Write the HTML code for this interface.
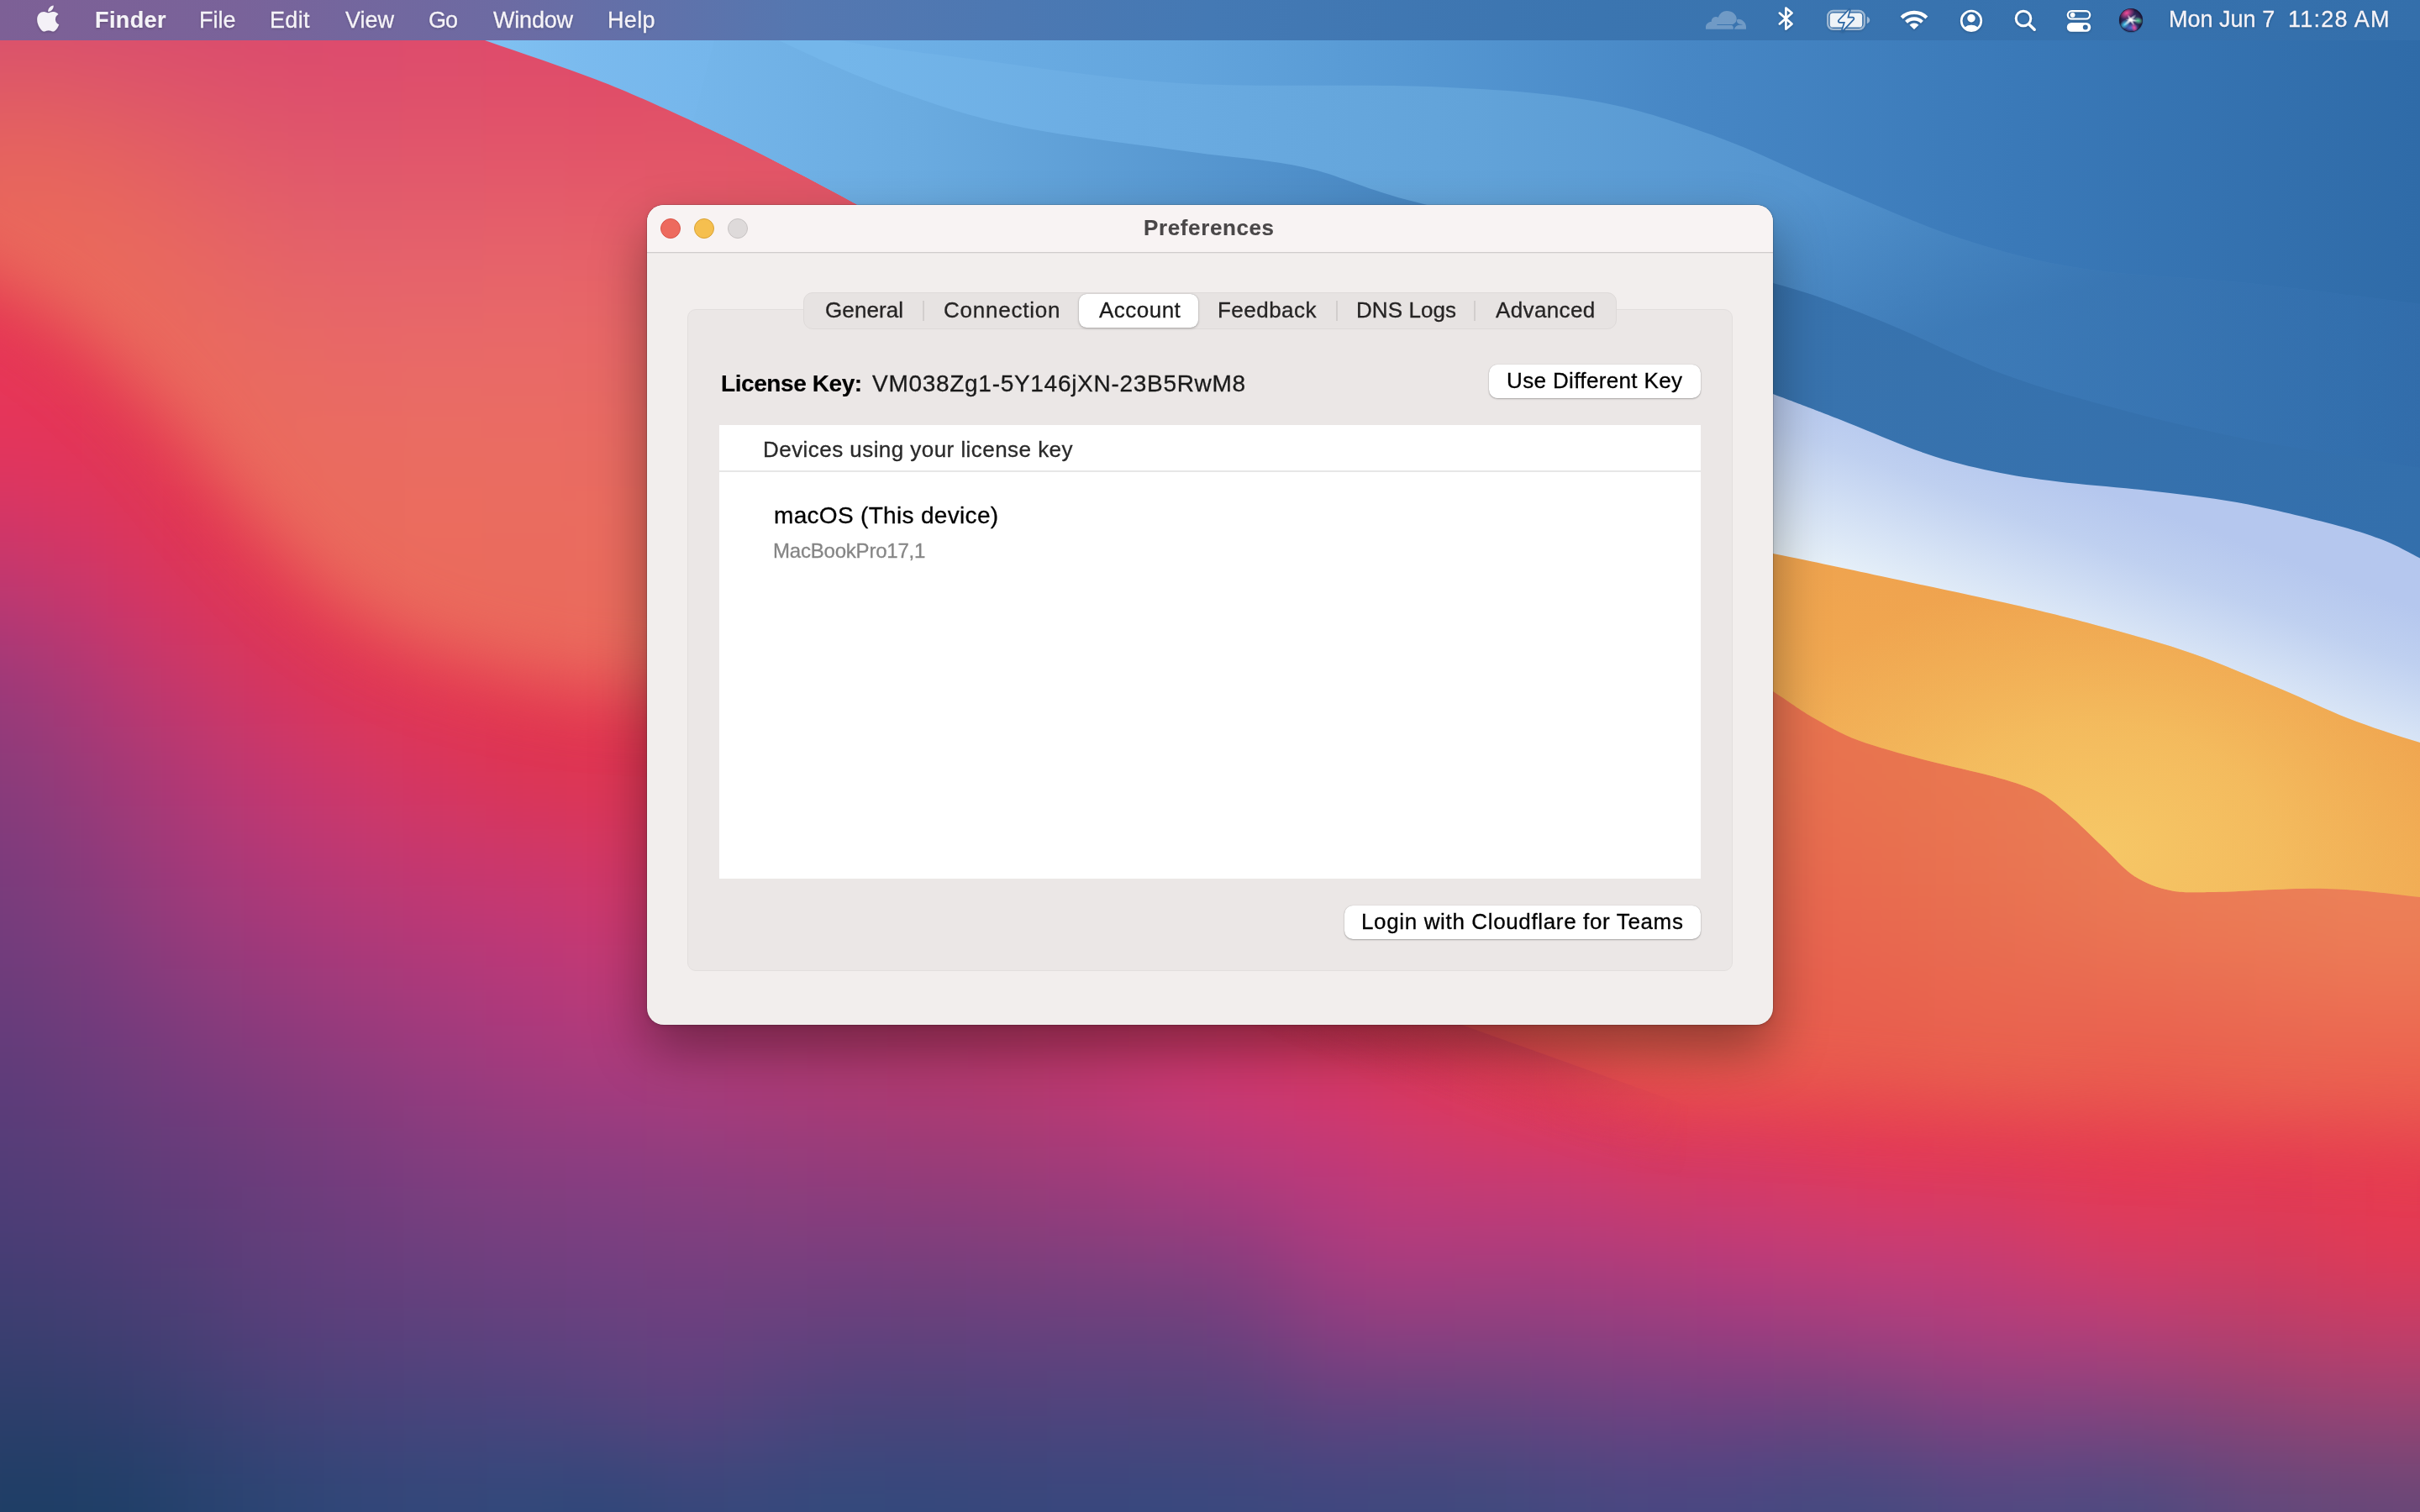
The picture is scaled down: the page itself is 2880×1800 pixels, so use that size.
<!DOCTYPE html>
<html lang="en"><head><meta charset="utf-8"><title>Preferences</title>
<style>
html,body{margin:0;padding:0;}
body{width:2880px;height:1800px;overflow:hidden;position:relative;background:#c8386c;font-family:"Liberation Sans", sans-serif;}
.t{position:absolute;white-space:nowrap;line-height:1;will-change:transform;-webkit-text-stroke:0.3px currentColor;}
.t.b{-webkit-text-stroke:0.15px currentColor;}
#menubar{position:absolute;left:0;top:0;width:2880px;height:48px;background:linear-gradient(90deg,#7d6096 0,#79639a 10%,#6c6ba3 21%,#5577b0 33%,#4479b4 50%,#3b75b0 66%,#3873af 80%,#346fab 100%);}
#menubar .t{color:#f5f3f8;text-shadow:0 1px 3px rgba(0,0,0,0.25);}
#win{position:absolute;left:770px;top:244px;width:1340px;height:976px;border-radius:20px;background:#f2eeed;box-shadow:0 0 0 1px rgba(0,0,0,0.12),0 30px 64px rgba(0,0,0,0.38),0 2px 6px rgba(0,0,0,0.10);overflow:hidden;}
#titlebar{position:absolute;left:0;top:0;width:1340px;height:56px;background:#f8f3f3;border-bottom:1px solid #d0cccc;box-shadow:0 1px 0 rgba(0,0,0,0.035);}
.tl{position:absolute;top:16px;width:24px;height:24px;border-radius:50%;box-sizing:border-box;}
#box{position:absolute;left:48px;top:124px;width:1244px;height:788px;background:#ebe7e6;border:1px solid #e2dedd;border-radius:10px;box-sizing:border-box;}
#seg{position:absolute;left:186px;top:104px;width:968px;height:44px;background:#e7e3e2;border:1px solid #dedad9;border-radius:11px;box-sizing:border-box;}
#segsel{position:absolute;left:514px;top:106px;width:142px;height:40px;background:#fff;border-radius:9px;box-shadow:0 1px 3px rgba(0,0,0,0.25),0 0 1px rgba(0,0,0,0.3);}
.sep{position:absolute;top:114px;width:2px;height:24px;background:#d2cecd;}
.btn{position:absolute;height:40px;background:#fff;border-radius:10px;box-shadow:0 1px 2px rgba(0,0,0,0.28),0 0 1px rgba(0,0,0,0.25);}
#table{position:absolute;left:86px;top:262px;width:1168px;height:540px;background:#fff;}
#thead{position:absolute;left:0;top:54px;width:1168px;height:2px;background:#e6e6e6;}
</style></head><body>
<svg id="wall" width="2880" height="1800" viewBox="0 0 2880 1800" style="position:absolute;left:0;top:0">
<defs>
<filter id="fb" filterUnits="userSpaceOnUse" x="-300" y="-300" width="3480" height="2400" color-interpolation-filters="sRGB"><feGaussianBlur stdDeviation="48"/></filter>
<filter id="fe" filterUnits="userSpaceOnUse" x="-300" y="-300" width="3480" height="2400" color-interpolation-filters="sRGB"><feGaussianBlur stdDeviation="42"/></filter>
<clipPath id="cpb1"><path d="M-200.0 250.0 C-166.7 265.3 -49.8 316.2 0.0 342.0 C49.8 367.8 66.0 378.7 99.0 405.0 C132.0 431.3 164.8 464.2 198.0 500.0 C231.2 535.8 264.8 584.0 298.0 620.0 C331.2 656.0 364.0 690.8 397.0 716.0 C430.0 741.2 463.0 757.0 496.0 771.0 C529.0 785.0 562.0 791.8 595.0 800.0 C628.0 808.2 665.0 815.8 694.0 820.0 C723.0 824.2 718.0 820.0 769.0 825.0 C820.0 830.0 894.8 810.8 1000.0 850.0 C1105.2 889.2 1276.3 998.2 1400.0 1060.0 C1523.7 1121.8 1665.3 1186.7 1742.0 1221.0 C1818.7 1255.3 1823.7 1253.5 1860.0 1266.0 C1896.3 1278.5 1918.3 1289.2 1960.0 1296.0 C2001.7 1302.8 2063.2 1303.7 2110.0 1307.0 C2156.8 1310.3 2190.7 1312.7 2241.0 1316.0 C2291.3 1319.3 2355.0 1323.3 2412.0 1327.0 C2469.0 1330.7 2526.0 1335.2 2583.0 1338.0 C2640.0 1340.8 2704.5 1342.0 2754.0 1344.0 C2803.5 1346.0 2822.3 1347.3 2880.0 1350.0 C2937.7 1352.7 3063.3 1358.3 3100.0 1360.0 L3100 -300 L-300 -300 Z"/></clipPath>
<linearGradient id="gsky" gradientUnits="userSpaceOnUse" x1="600" y1="60" x2="2880" y2="60">
<stop offset="0" stop-color="#7fc0f1"/><stop offset="0.044" stop-color="#7abaee"/><stop offset="0.175" stop-color="#70b2e8"/><stop offset="0.35" stop-color="#63a5dd"/><stop offset="0.48" stop-color="#5597d2"/><stop offset="0.614" stop-color="#4787c5"/><stop offset="0.79" stop-color="#3a79b8"/><stop offset="1" stop-color="#2f6ba8"/></linearGradient>
<linearGradient id="gwhite" gradientUnits="userSpaceOnUse" x1="2400" y1="545" x2="2325" y2="745">
<stop offset="0" stop-color="#b5c7ee"/><stop offset="0.3" stop-color="#bfd0f0"/><stop offset="0.65" stop-color="#d5e2f5"/><stop offset="1" stop-color="#eaf3f9"/></linearGradient>
<linearGradient id="gorange" gradientUnits="userSpaceOnUse" x1="2560" y1="720" x2="2470" y2="1040">
<stop offset="0" stop-color="#efa24e"/><stop offset="0.4" stop-color="#f0a650"/><stop offset="1" stop-color="#f1ae56"/></linearGradient>
<radialGradient id="gyel" gradientUnits="userSpaceOnUse" cx="2500" cy="1010" r="330" gradientTransform="translate(2500 1010) scale(1.35 1) rotate(18) translate(-2500 -1010)">
<stop offset="0" stop-color="#f6c766" stop-opacity="1"/><stop offset="0.45" stop-color="#f5c363" stop-opacity="0.7"/><stop offset="1" stop-color="#f3bb5e" stop-opacity="0"/></radialGradient>
<linearGradient id="gw1" gradientUnits="userSpaceOnUse" x1="1000" y1="60" x2="2880" y2="60">
<stop offset="0" stop-color="#74b6ea"/><stop offset="0.16" stop-color="#6cade3"/><stop offset="0.4" stop-color="#62a3d9"/><stop offset="0.585" stop-color="#5696d0"/><stop offset="0.745" stop-color="#4a8ac6"/><stop offset="0.96" stop-color="#3a78b6"/><stop offset="1" stop-color="#3874b2"/></linearGradient>
<linearGradient id="gw1d" gradientUnits="userSpaceOnUse" x1="0" y1="0" x2="60" y2="200" spreadMethod="pad" gradientTransform="translate(2100 240)">
<stop offset="0" stop-color="#2a64a2" stop-opacity="0"/><stop offset="1" stop-color="#2a64a2" stop-opacity="0.45"/></linearGradient>
<linearGradient id="gw2" gradientUnits="userSpaceOnUse" x1="700" y1="60" x2="2880" y2="60">
<stop offset="0" stop-color="#7abbef"/><stop offset="0.18" stop-color="#6aabe0"/><stop offset="0.37" stop-color="#5292cc"/><stop offset="0.5" stop-color="#4281bd"/><stop offset="0.66" stop-color="#3873ae"/><stop offset="1" stop-color="#336fac"/></linearGradient>
<linearGradient id="gedge" gradientUnits="userSpaceOnUse" x1="1850" y1="1260" x2="1820" y2="1345"><stop offset="0" stop-color="#b82a58" stop-opacity="0.28"/><stop offset="1" stop-color="#b82a58" stop-opacity="0"/></linearGradient>
<linearGradient id="gmaskh" gradientUnits="userSpaceOnUse" x1="1820" y1="0" x2="2010" y2="0"><stop offset="0" stop-color="#fff"/><stop offset="1" stop-color="#000"/></linearGradient>
<mask id="medge" maskUnits="userSpaceOnUse" x="1500" y="1100" width="700" height="400"><rect x="1500" y="1100" width="700" height="400" fill="url(#gmaskh)"/></mask>
<clipPath id="cpsky"><path d="M440.0 0.0 C462.8 8.0 532.2 32.2 577.0 48.0 C621.8 63.8 670.5 79.7 709.0 94.5 C747.5 109.3 775.0 122.1 808.0 137.0 C841.0 151.9 871.8 166.3 907.0 184.0 C942.2 201.7 978.5 220.7 1019.0 243.0 C1059.5 265.3 1103.2 288.5 1150.0 318.0 C1196.8 347.5 1275.0 403.0 1300.0 420.0 L1400 560 L2100 760 L2960 860 L2960 -10 L440 -10 Z"/></clipPath>
</defs>
<rect width="2880" height="1800" fill="#c8386c"/>
<g filter="url(#fb)" class="mz"><rect x="-288" y="-288" width="97" height="97" fill="#eb354c"/><rect x="-192" y="-288" width="97" height="97" fill="#eb354c"/><rect x="-96" y="-288" width="97" height="97" fill="#eb354c"/><rect x="0" y="-288" width="97" height="97" fill="#ed354b"/><rect x="96" y="-288" width="97" height="97" fill="#f03549"/><rect x="192" y="-288" width="97" height="97" fill="#f33548"/><rect x="288" y="-288" width="97" height="97" fill="#f63546"/><rect x="384" y="-288" width="97" height="97" fill="#f93545"/><rect x="480" y="-288" width="97" height="97" fill="#fb3544"/><rect x="576" y="-288" width="97" height="97" fill="#fe3443"/><rect x="672" y="-288" width="97" height="97" fill="#ff3442"/><rect x="768" y="-288" width="97" height="97" fill="#ff3442"/><rect x="864" y="-288" width="97" height="97" fill="#ff3441"/><rect x="960" y="-288" width="97" height="97" fill="#ff3440"/><rect x="1056" y="-288" width="97" height="97" fill="#ff343f"/><rect x="1152" y="-288" width="97" height="97" fill="#ff343f"/><rect x="1248" y="-288" width="97" height="97" fill="#ff343e"/><rect x="1344" y="-288" width="97" height="97" fill="#ff343e"/><rect x="1440" y="-288" width="97" height="97" fill="#ff343d"/><rect x="1536" y="-288" width="97" height="97" fill="#ff343d"/><rect x="1632" y="-288" width="97" height="97" fill="#ff343c"/><rect x="1728" y="-288" width="97" height="97" fill="#ff343c"/><rect x="1824" y="-288" width="97" height="97" fill="#ff343c"/><rect x="1920" y="-288" width="97" height="97" fill="#ff343c"/><rect x="2016" y="-288" width="97" height="97" fill="#ff343c"/><rect x="2112" y="-288" width="97" height="97" fill="#ff343c"/><rect x="2208" y="-288" width="97" height="97" fill="#ff353c"/><rect x="2304" y="-288" width="97" height="97" fill="#ff353c"/><rect x="2400" y="-288" width="97" height="97" fill="#ff353c"/><rect x="2496" y="-288" width="97" height="97" fill="#ff353c"/><rect x="2592" y="-288" width="97" height="97" fill="#ff353d"/><rect x="2688" y="-288" width="97" height="97" fill="#ff353d"/><rect x="2784" y="-288" width="97" height="97" fill="#ff353e"/><rect x="2880" y="-288" width="97" height="97" fill="#ff353e"/><rect x="2976" y="-288" width="97" height="97" fill="#ff353e"/><rect x="3072" y="-288" width="97" height="97" fill="#ff353e"/><rect x="-288" y="-192" width="97" height="97" fill="#eb354c"/><rect x="-192" y="-192" width="97" height="97" fill="#eb354c"/><rect x="-96" y="-192" width="97" height="97" fill="#eb354c"/><rect x="0" y="-192" width="97" height="97" fill="#ed354b"/><rect x="96" y="-192" width="97" height="97" fill="#f03549"/><rect x="192" y="-192" width="97" height="97" fill="#f33548"/><rect x="288" y="-192" width="97" height="97" fill="#f63546"/><rect x="384" y="-192" width="97" height="97" fill="#f93545"/><rect x="480" y="-192" width="97" height="97" fill="#fb3544"/><rect x="576" y="-192" width="97" height="97" fill="#fe3443"/><rect x="672" y="-192" width="97" height="97" fill="#ff3442"/><rect x="768" y="-192" width="97" height="97" fill="#ff3442"/><rect x="864" y="-192" width="97" height="97" fill="#ff3441"/><rect x="960" y="-192" width="97" height="97" fill="#ff3440"/><rect x="1056" y="-192" width="97" height="97" fill="#ff343f"/><rect x="1152" y="-192" width="97" height="97" fill="#ff343f"/><rect x="1248" y="-192" width="97" height="97" fill="#ff343e"/><rect x="1344" y="-192" width="97" height="97" fill="#ff343e"/><rect x="1440" y="-192" width="97" height="97" fill="#ff343d"/><rect x="1536" y="-192" width="97" height="97" fill="#ff343d"/><rect x="1632" y="-192" width="97" height="97" fill="#ff343c"/><rect x="1728" y="-192" width="97" height="97" fill="#ff343c"/><rect x="1824" y="-192" width="97" height="97" fill="#ff343c"/><rect x="1920" y="-192" width="97" height="97" fill="#ff343c"/><rect x="2016" y="-192" width="97" height="97" fill="#ff343c"/><rect x="2112" y="-192" width="97" height="97" fill="#ff343c"/><rect x="2208" y="-192" width="97" height="97" fill="#ff353c"/><rect x="2304" y="-192" width="97" height="97" fill="#ff353c"/><rect x="2400" y="-192" width="97" height="97" fill="#ff353c"/><rect x="2496" y="-192" width="97" height="97" fill="#ff353c"/><rect x="2592" y="-192" width="97" height="97" fill="#ff353d"/><rect x="2688" y="-192" width="97" height="97" fill="#ff353d"/><rect x="2784" y="-192" width="97" height="97" fill="#ff353e"/><rect x="2880" y="-192" width="97" height="97" fill="#ff353e"/><rect x="2976" y="-192" width="97" height="97" fill="#ff353e"/><rect x="3072" y="-192" width="97" height="97" fill="#ff353e"/><rect x="-288" y="-96" width="97" height="97" fill="#eb354c"/><rect x="-192" y="-96" width="97" height="97" fill="#eb354c"/><rect x="-96" y="-96" width="97" height="97" fill="#eb354c"/><rect x="0" y="-96" width="97" height="97" fill="#ed354b"/><rect x="96" y="-96" width="97" height="97" fill="#f03549"/><rect x="192" y="-96" width="97" height="97" fill="#f33548"/><rect x="288" y="-96" width="97" height="97" fill="#f63546"/><rect x="384" y="-96" width="97" height="97" fill="#f93545"/><rect x="480" y="-96" width="97" height="97" fill="#fb3544"/><rect x="576" y="-96" width="97" height="97" fill="#fe3443"/><rect x="672" y="-96" width="97" height="97" fill="#ff3442"/><rect x="768" y="-96" width="97" height="97" fill="#ff3442"/><rect x="864" y="-96" width="97" height="97" fill="#ff3441"/><rect x="960" y="-96" width="97" height="97" fill="#ff3440"/><rect x="1056" y="-96" width="97" height="97" fill="#ff343f"/><rect x="1152" y="-96" width="97" height="97" fill="#ff343f"/><rect x="1248" y="-96" width="97" height="97" fill="#ff343e"/><rect x="1344" y="-96" width="97" height="97" fill="#ff343e"/><rect x="1440" y="-96" width="97" height="97" fill="#ff343d"/><rect x="1536" y="-96" width="97" height="97" fill="#ff343d"/><rect x="1632" y="-96" width="97" height="97" fill="#ff343c"/><rect x="1728" y="-96" width="97" height="97" fill="#ff343c"/><rect x="1824" y="-96" width="97" height="97" fill="#ff343c"/><rect x="1920" y="-96" width="97" height="97" fill="#ff343c"/><rect x="2016" y="-96" width="97" height="97" fill="#ff343c"/><rect x="2112" y="-96" width="97" height="97" fill="#ff343c"/><rect x="2208" y="-96" width="97" height="97" fill="#ff353c"/><rect x="2304" y="-96" width="97" height="97" fill="#ff353c"/><rect x="2400" y="-96" width="97" height="97" fill="#ff353c"/><rect x="2496" y="-96" width="97" height="97" fill="#ff353c"/><rect x="2592" y="-96" width="97" height="97" fill="#ff353d"/><rect x="2688" y="-96" width="97" height="97" fill="#ff353d"/><rect x="2784" y="-96" width="97" height="97" fill="#ff353e"/><rect x="2880" y="-96" width="97" height="97" fill="#ff353e"/><rect x="2976" y="-96" width="97" height="97" fill="#ff353e"/><rect x="3072" y="-96" width="97" height="97" fill="#ff353e"/><rect x="-288" y="0" width="97" height="97" fill="#ea354c"/><rect x="-192" y="0" width="97" height="97" fill="#ea354c"/><rect x="-96" y="0" width="97" height="97" fill="#ea354c"/><rect x="0" y="0" width="97" height="97" fill="#eb354b"/><rect x="96" y="0" width="97" height="97" fill="#ef354a"/><rect x="192" y="0" width="97" height="97" fill="#f23548"/><rect x="288" y="0" width="97" height="97" fill="#f53547"/><rect x="384" y="0" width="97" height="97" fill="#f73546"/><rect x="480" y="0" width="97" height="97" fill="#fa3545"/><rect x="576" y="0" width="97" height="97" fill="#fc3544"/><rect x="672" y="0" width="97" height="97" fill="#ff3443"/><rect x="768" y="0" width="97" height="97" fill="#ff3442"/><rect x="864" y="0" width="97" height="97" fill="#ff3441"/><rect x="960" y="0" width="97" height="97" fill="#ff3441"/><rect x="1056" y="0" width="97" height="97" fill="#ff3440"/><rect x="1152" y="0" width="97" height="97" fill="#ff343f"/><rect x="1248" y="0" width="97" height="97" fill="#ff343f"/><rect x="1344" y="0" width="97" height="97" fill="#ff343e"/><rect x="1440" y="0" width="97" height="97" fill="#ff343d"/><rect x="1536" y="0" width="97" height="97" fill="#ff343d"/><rect x="1632" y="0" width="97" height="97" fill="#ff343d"/><rect x="1728" y="0" width="97" height="97" fill="#ff343c"/><rect x="1824" y="0" width="97" height="97" fill="#ff343c"/><rect x="1920" y="0" width="97" height="97" fill="#ff343c"/><rect x="2016" y="0" width="97" height="97" fill="#ff353c"/><rect x="2112" y="0" width="97" height="97" fill="#ff353c"/><rect x="2208" y="0" width="97" height="97" fill="#ff353c"/><rect x="2304" y="0" width="97" height="97" fill="#ff353c"/><rect x="2400" y="0" width="97" height="97" fill="#ff353c"/><rect x="2496" y="0" width="97" height="97" fill="#ff353d"/><rect x="2592" y="0" width="97" height="97" fill="#ff353d"/><rect x="2688" y="0" width="97" height="97" fill="#ff353e"/><rect x="2784" y="0" width="97" height="97" fill="#ff353e"/><rect x="2880" y="0" width="97" height="97" fill="#ff363e"/><rect x="2976" y="0" width="97" height="97" fill="#ff363e"/><rect x="3072" y="0" width="97" height="97" fill="#ff363e"/><rect x="-288" y="96" width="97" height="97" fill="#e7364d"/><rect x="-192" y="96" width="97" height="97" fill="#e7364d"/><rect x="-96" y="96" width="97" height="97" fill="#e7364d"/><rect x="0" y="96" width="97" height="97" fill="#e9364d"/><rect x="96" y="96" width="97" height="97" fill="#eb354b"/><rect x="192" y="96" width="97" height="97" fill="#ee354a"/><rect x="288" y="96" width="97" height="97" fill="#f13548"/><rect x="384" y="96" width="97" height="97" fill="#f43547"/><rect x="480" y="96" width="97" height="97" fill="#f73546"/><rect x="576" y="96" width="97" height="97" fill="#f93545"/><rect x="672" y="96" width="97" height="97" fill="#fc3544"/><rect x="768" y="96" width="97" height="97" fill="#fe3543"/><rect x="864" y="96" width="97" height="97" fill="#ff3442"/><rect x="960" y="96" width="97" height="97" fill="#ff3442"/><rect x="1056" y="96" width="97" height="97" fill="#ff3441"/><rect x="1152" y="96" width="97" height="97" fill="#ff3440"/><rect x="1248" y="96" width="97" height="97" fill="#ff343f"/><rect x="1344" y="96" width="97" height="97" fill="#ff343f"/><rect x="1440" y="96" width="97" height="97" fill="#ff343e"/><rect x="1536" y="96" width="97" height="97" fill="#ff343e"/><rect x="1632" y="96" width="97" height="97" fill="#ff343d"/><rect x="1728" y="96" width="97" height="97" fill="#ff353d"/><rect x="1824" y="96" width="97" height="97" fill="#ff353d"/><rect x="1920" y="96" width="97" height="97" fill="#ff353d"/><rect x="2016" y="96" width="97" height="97" fill="#ff353d"/><rect x="2112" y="96" width="97" height="97" fill="#ff353d"/><rect x="2208" y="96" width="97" height="97" fill="#ff353d"/><rect x="2304" y="96" width="97" height="97" fill="#ff353d"/><rect x="2400" y="96" width="97" height="97" fill="#ff353d"/><rect x="2496" y="96" width="97" height="97" fill="#ff353e"/><rect x="2592" y="96" width="97" height="97" fill="#ff353e"/><rect x="2688" y="96" width="97" height="97" fill="#ff363e"/><rect x="2784" y="96" width="97" height="97" fill="#ff363f"/><rect x="2880" y="96" width="97" height="97" fill="#ff363f"/><rect x="2976" y="96" width="97" height="97" fill="#ff363f"/><rect x="3072" y="96" width="97" height="97" fill="#ff363f"/><rect x="-288" y="192" width="97" height="97" fill="#e5364f"/><rect x="-192" y="192" width="97" height="97" fill="#e5364f"/><rect x="-96" y="192" width="97" height="97" fill="#e5364f"/><rect x="0" y="192" width="97" height="97" fill="#e6364e"/><rect x="96" y="192" width="97" height="97" fill="#e8364d"/><rect x="192" y="192" width="97" height="97" fill="#eb364b"/><rect x="288" y="192" width="97" height="97" fill="#ee354a"/><rect x="384" y="192" width="97" height="97" fill="#f13548"/><rect x="480" y="192" width="97" height="97" fill="#f43547"/><rect x="576" y="192" width="97" height="97" fill="#f63546"/><rect x="672" y="192" width="97" height="97" fill="#f83545"/><rect x="768" y="192" width="97" height="97" fill="#fb3545"/><rect x="864" y="192" width="97" height="97" fill="#fd3544"/><rect x="960" y="192" width="97" height="97" fill="#ff3543"/><rect x="1056" y="192" width="97" height="97" fill="#ff3542"/><rect x="1152" y="192" width="97" height="97" fill="#ff3441"/><rect x="1248" y="192" width="97" height="97" fill="#ff3441"/><rect x="1344" y="192" width="97" height="97" fill="#ff3540"/><rect x="1440" y="192" width="97" height="97" fill="#ff353f"/><rect x="1536" y="192" width="97" height="97" fill="#ff353f"/><rect x="1632" y="192" width="97" height="97" fill="#ff353e"/><rect x="1728" y="192" width="97" height="97" fill="#ff353e"/><rect x="1824" y="192" width="97" height="97" fill="#ff353e"/><rect x="1920" y="192" width="97" height="97" fill="#ff353d"/><rect x="2016" y="192" width="97" height="97" fill="#ff353d"/><rect x="2112" y="192" width="97" height="97" fill="#ff353d"/><rect x="2208" y="192" width="97" height="97" fill="#ff353e"/><rect x="2304" y="192" width="97" height="97" fill="#ff353e"/><rect x="2400" y="192" width="97" height="97" fill="#ff353e"/><rect x="2496" y="192" width="97" height="97" fill="#ff363e"/><rect x="2592" y="192" width="97" height="97" fill="#ff363f"/><rect x="2688" y="192" width="97" height="97" fill="#ff363f"/><rect x="2784" y="192" width="97" height="97" fill="#ff3640"/><rect x="2880" y="192" width="97" height="97" fill="#ff3640"/><rect x="2976" y="192" width="97" height="97" fill="#ff3640"/><rect x="3072" y="192" width="97" height="97" fill="#ff3640"/><rect x="-288" y="288" width="97" height="97" fill="#e4364f"/><rect x="-192" y="288" width="97" height="97" fill="#e4364f"/><rect x="-96" y="288" width="97" height="97" fill="#e4364f"/><rect x="0" y="288" width="97" height="97" fill="#e4364f"/><rect x="96" y="288" width="97" height="97" fill="#e5364e"/><rect x="192" y="288" width="97" height="97" fill="#e8364d"/><rect x="288" y="288" width="97" height="97" fill="#eb364b"/><rect x="384" y="288" width="97" height="97" fill="#ee354a"/><rect x="480" y="288" width="97" height="97" fill="#f13549"/><rect x="576" y="288" width="97" height="97" fill="#f33548"/><rect x="672" y="288" width="97" height="97" fill="#f53547"/><rect x="768" y="288" width="97" height="97" fill="#f73546"/><rect x="864" y="288" width="97" height="97" fill="#f93545"/><rect x="960" y="288" width="97" height="97" fill="#fb3544"/><rect x="1056" y="288" width="97" height="97" fill="#fd3544"/><rect x="1152" y="288" width="97" height="97" fill="#ff3543"/><rect x="1248" y="288" width="97" height="97" fill="#ff3542"/><rect x="1344" y="288" width="97" height="97" fill="#ff3541"/><rect x="1440" y="288" width="97" height="97" fill="#ff3540"/><rect x="1536" y="288" width="97" height="97" fill="#ff3540"/><rect x="1632" y="288" width="97" height="97" fill="#ff353f"/><rect x="1728" y="288" width="97" height="97" fill="#ff353f"/><rect x="1824" y="288" width="97" height="97" fill="#ff353e"/><rect x="1920" y="288" width="97" height="97" fill="#ff353e"/><rect x="2016" y="288" width="97" height="97" fill="#ff353e"/><rect x="2112" y="288" width="97" height="97" fill="#ff353e"/><rect x="2208" y="288" width="97" height="97" fill="#ff363e"/><rect x="2304" y="288" width="97" height="97" fill="#ff363f"/><rect x="2400" y="288" width="97" height="97" fill="#ff363f"/><rect x="2496" y="288" width="97" height="97" fill="#ff363f"/><rect x="2592" y="288" width="97" height="97" fill="#ff3640"/><rect x="2688" y="288" width="97" height="97" fill="#ff3640"/><rect x="2784" y="288" width="97" height="97" fill="#ff3641"/><rect x="2880" y="288" width="97" height="97" fill="#ff3641"/><rect x="2976" y="288" width="97" height="97" fill="#ff3641"/><rect x="3072" y="288" width="97" height="97" fill="#ff3641"/><rect x="-288" y="384" width="97" height="97" fill="#e8365a"/><rect x="-192" y="384" width="97" height="97" fill="#e8365a"/><rect x="-96" y="384" width="97" height="97" fill="#e8365a"/><rect x="0" y="384" width="97" height="97" fill="#e63654"/><rect x="96" y="384" width="97" height="97" fill="#e43650"/><rect x="192" y="384" width="97" height="97" fill="#e5364e"/><rect x="288" y="384" width="97" height="97" fill="#e8364d"/><rect x="384" y="384" width="97" height="97" fill="#eb364b"/><rect x="480" y="384" width="97" height="97" fill="#ed364a"/><rect x="576" y="384" width="97" height="97" fill="#ef3549"/><rect x="672" y="384" width="97" height="97" fill="#f13549"/><rect x="768" y="384" width="97" height="97" fill="#f33548"/><rect x="864" y="384" width="97" height="97" fill="#f53547"/><rect x="960" y="384" width="97" height="97" fill="#f73546"/><rect x="1056" y="384" width="97" height="97" fill="#f93545"/><rect x="1152" y="384" width="97" height="97" fill="#fb3544"/><rect x="1248" y="384" width="97" height="97" fill="#fd3543"/><rect x="1344" y="384" width="97" height="97" fill="#ff3542"/><rect x="1440" y="384" width="97" height="97" fill="#ff3541"/><rect x="1536" y="384" width="97" height="97" fill="#ff3541"/><rect x="1632" y="384" width="97" height="97" fill="#ff3540"/><rect x="1728" y="384" width="97" height="97" fill="#ff3540"/><rect x="1824" y="384" width="97" height="97" fill="#ff363f"/><rect x="1920" y="384" width="97" height="97" fill="#ff363f"/><rect x="2016" y="384" width="97" height="97" fill="#ff363f"/><rect x="2112" y="384" width="97" height="97" fill="#ff363f"/><rect x="2208" y="384" width="97" height="97" fill="#ff363f"/><rect x="2304" y="384" width="97" height="97" fill="#ff3640"/><rect x="2400" y="384" width="97" height="97" fill="#ff3640"/><rect x="2496" y="384" width="97" height="97" fill="#ff3640"/><rect x="2592" y="384" width="97" height="97" fill="#ff3641"/><rect x="2688" y="384" width="97" height="97" fill="#ff3641"/><rect x="2784" y="384" width="97" height="97" fill="#ff3742"/><rect x="2880" y="384" width="97" height="97" fill="#ff3742"/><rect x="2976" y="384" width="97" height="97" fill="#ff3742"/><rect x="3072" y="384" width="97" height="97" fill="#ff3742"/><rect x="-288" y="480" width="97" height="97" fill="#e5345c"/><rect x="-192" y="480" width="97" height="97" fill="#e5345c"/><rect x="-96" y="480" width="97" height="97" fill="#e5345c"/><rect x="0" y="480" width="97" height="97" fill="#e4355b"/><rect x="96" y="480" width="97" height="97" fill="#e33654"/><rect x="192" y="480" width="97" height="97" fill="#e4364f"/><rect x="288" y="480" width="97" height="97" fill="#e5364e"/><rect x="384" y="480" width="97" height="97" fill="#e8364d"/><rect x="480" y="480" width="97" height="97" fill="#ea364c"/><rect x="576" y="480" width="97" height="97" fill="#eb364b"/><rect x="672" y="480" width="97" height="97" fill="#ed364b"/><rect x="768" y="480" width="97" height="97" fill="#ee354a"/><rect x="864" y="480" width="97" height="97" fill="#f03549"/><rect x="960" y="480" width="97" height="97" fill="#f23548"/><rect x="1056" y="480" width="97" height="97" fill="#f43547"/><rect x="1152" y="480" width="97" height="97" fill="#f73546"/><rect x="1248" y="480" width="97" height="97" fill="#f93545"/><rect x="1344" y="480" width="97" height="97" fill="#fc3544"/><rect x="1440" y="480" width="97" height="97" fill="#fe3543"/><rect x="1536" y="480" width="97" height="97" fill="#ff3642"/><rect x="1632" y="480" width="97" height="97" fill="#ff3641"/><rect x="1728" y="480" width="97" height="97" fill="#ff3641"/><rect x="1824" y="480" width="97" height="97" fill="#ff3641"/><rect x="1920" y="480" width="97" height="97" fill="#ff3641"/><rect x="2016" y="480" width="97" height="97" fill="#ff3640"/><rect x="2112" y="480" width="97" height="97" fill="#ff3640"/><rect x="2208" y="480" width="97" height="97" fill="#ff3641"/><rect x="2304" y="480" width="97" height="97" fill="#ff3641"/><rect x="2400" y="480" width="97" height="97" fill="#ff3641"/><rect x="2496" y="480" width="97" height="97" fill="#ff3741"/><rect x="2592" y="480" width="97" height="97" fill="#ff3742"/><rect x="2688" y="480" width="97" height="97" fill="#ff3742"/><rect x="2784" y="480" width="97" height="97" fill="#ff3743"/><rect x="2880" y="480" width="97" height="97" fill="#ff3743"/><rect x="2976" y="480" width="97" height="97" fill="#ff3743"/><rect x="3072" y="480" width="97" height="97" fill="#ff3743"/><rect x="-288" y="576" width="97" height="97" fill="#d03668"/><rect x="-192" y="576" width="97" height="97" fill="#d03668"/><rect x="-96" y="576" width="97" height="97" fill="#d03668"/><rect x="0" y="576" width="97" height="97" fill="#d53665"/><rect x="96" y="576" width="97" height="97" fill="#dc365c"/><rect x="192" y="576" width="97" height="97" fill="#e23551"/><rect x="288" y="576" width="97" height="97" fill="#e4364f"/><rect x="384" y="576" width="97" height="97" fill="#e5364f"/><rect x="480" y="576" width="97" height="97" fill="#e7364e"/><rect x="576" y="576" width="97" height="97" fill="#e8364d"/><rect x="672" y="576" width="97" height="97" fill="#e9364d"/><rect x="768" y="576" width="97" height="97" fill="#ea364c"/><rect x="864" y="576" width="97" height="97" fill="#eb364b"/><rect x="960" y="576" width="97" height="97" fill="#ed364b"/><rect x="1056" y="576" width="97" height="97" fill="#ef3549"/><rect x="1152" y="576" width="97" height="97" fill="#f23548"/><rect x="1248" y="576" width="97" height="97" fill="#f53547"/><rect x="1344" y="576" width="97" height="97" fill="#f73545"/><rect x="1440" y="576" width="97" height="97" fill="#fa3644"/><rect x="1536" y="576" width="97" height="97" fill="#fc3644"/><rect x="1632" y="576" width="97" height="97" fill="#ff3643"/><rect x="1728" y="576" width="97" height="97" fill="#ff3642"/><rect x="1824" y="576" width="97" height="97" fill="#ff3742"/><rect x="1920" y="576" width="97" height="97" fill="#ff3742"/><rect x="2016" y="576" width="97" height="97" fill="#ff3742"/><rect x="2112" y="576" width="97" height="97" fill="#ff3742"/><rect x="2208" y="576" width="97" height="97" fill="#ff3742"/><rect x="2304" y="576" width="97" height="97" fill="#ff3742"/><rect x="2400" y="576" width="97" height="97" fill="#ff3742"/><rect x="2496" y="576" width="97" height="97" fill="#ff3743"/><rect x="2592" y="576" width="97" height="97" fill="#ff3743"/><rect x="2688" y="576" width="97" height="97" fill="#ff3744"/><rect x="2784" y="576" width="97" height="97" fill="#ff3744"/><rect x="2880" y="576" width="97" height="97" fill="#ff3744"/><rect x="2976" y="576" width="97" height="97" fill="#ff3744"/><rect x="3072" y="576" width="97" height="97" fill="#ff3744"/><rect x="-288" y="672" width="97" height="97" fill="#b63874"/><rect x="-192" y="672" width="97" height="97" fill="#b63874"/><rect x="-96" y="672" width="97" height="97" fill="#b63874"/><rect x="0" y="672" width="97" height="97" fill="#bd3871"/><rect x="96" y="672" width="97" height="97" fill="#ce3668"/><rect x="192" y="672" width="97" height="97" fill="#da365d"/><rect x="288" y="672" width="97" height="97" fill="#e23652"/><rect x="384" y="672" width="97" height="97" fill="#e4364e"/><rect x="480" y="672" width="97" height="97" fill="#e4364f"/><rect x="576" y="672" width="97" height="97" fill="#e4364f"/><rect x="672" y="672" width="97" height="97" fill="#e5364f"/><rect x="768" y="672" width="97" height="97" fill="#e5364e"/><rect x="864" y="672" width="97" height="97" fill="#e6364e"/><rect x="960" y="672" width="97" height="97" fill="#e7364d"/><rect x="1056" y="672" width="97" height="97" fill="#ea364c"/><rect x="1152" y="672" width="97" height="97" fill="#ed364a"/><rect x="1248" y="672" width="97" height="97" fill="#f03649"/><rect x="1344" y="672" width="97" height="97" fill="#f33647"/><rect x="1440" y="672" width="97" height="97" fill="#f63646"/><rect x="1536" y="672" width="97" height="97" fill="#f83645"/><rect x="1632" y="672" width="97" height="97" fill="#fb3745"/><rect x="1728" y="672" width="97" height="97" fill="#fc3744"/><rect x="1824" y="672" width="97" height="97" fill="#fe3744"/><rect x="1920" y="672" width="97" height="97" fill="#ff3743"/><rect x="2016" y="672" width="97" height="97" fill="#ff3743"/><rect x="2112" y="672" width="97" height="97" fill="#ff3743"/><rect x="2208" y="672" width="97" height="97" fill="#ff3744"/><rect x="2304" y="672" width="97" height="97" fill="#ff3744"/><rect x="2400" y="672" width="97" height="97" fill="#ff3744"/><rect x="2496" y="672" width="97" height="97" fill="#ff3744"/><rect x="2592" y="672" width="97" height="97" fill="#ff3745"/><rect x="2688" y="672" width="97" height="97" fill="#ff3745"/><rect x="2784" y="672" width="97" height="97" fill="#ff3845"/><rect x="2880" y="672" width="97" height="97" fill="#fe3846"/><rect x="2976" y="672" width="97" height="97" fill="#fe3846"/><rect x="3072" y="672" width="97" height="97" fill="#fe3846"/><rect x="-288" y="768" width="97" height="97" fill="#983a7a"/><rect x="-192" y="768" width="97" height="97" fill="#983a7a"/><rect x="-96" y="768" width="97" height="97" fill="#983a7a"/><rect x="0" y="768" width="97" height="97" fill="#a23978"/><rect x="96" y="768" width="97" height="97" fill="#b93871"/><rect x="192" y="768" width="97" height="97" fill="#ca3768"/><rect x="288" y="768" width="97" height="97" fill="#d7365e"/><rect x="384" y="768" width="97" height="97" fill="#e03655"/><rect x="480" y="768" width="97" height="97" fill="#e43650"/><rect x="576" y="768" width="97" height="97" fill="#e4364f"/><rect x="672" y="768" width="97" height="97" fill="#e4364f"/><rect x="768" y="768" width="97" height="97" fill="#e4364f"/><rect x="864" y="768" width="97" height="97" fill="#e4364f"/><rect x="960" y="768" width="97" height="97" fill="#e4364f"/><rect x="1056" y="768" width="97" height="97" fill="#e6364e"/><rect x="1152" y="768" width="97" height="97" fill="#e8364d"/><rect x="1248" y="768" width="97" height="97" fill="#eb364b"/><rect x="1344" y="768" width="97" height="97" fill="#ee364a"/><rect x="1440" y="768" width="97" height="97" fill="#f13648"/><rect x="1536" y="768" width="97" height="97" fill="#f43747"/><rect x="1632" y="768" width="97" height="97" fill="#f63746"/><rect x="1728" y="768" width="97" height="97" fill="#f83846"/><rect x="1824" y="768" width="97" height="97" fill="#fa3846"/><rect x="1920" y="768" width="97" height="97" fill="#fb3845"/><rect x="2016" y="768" width="97" height="97" fill="#fc3845"/><rect x="2112" y="768" width="97" height="97" fill="#fd3845"/><rect x="2208" y="768" width="97" height="97" fill="#fd3845"/><rect x="2304" y="768" width="97" height="97" fill="#fd3845"/><rect x="2400" y="768" width="97" height="97" fill="#fd3846"/><rect x="2496" y="768" width="97" height="97" fill="#fd3846"/><rect x="2592" y="768" width="97" height="97" fill="#fd3846"/><rect x="2688" y="768" width="97" height="97" fill="#fc3847"/><rect x="2784" y="768" width="97" height="97" fill="#fb3847"/><rect x="2880" y="768" width="97" height="97" fill="#fb3847"/><rect x="2976" y="768" width="97" height="97" fill="#fb3847"/><rect x="3072" y="768" width="97" height="97" fill="#fb3847"/><rect x="-288" y="864" width="97" height="97" fill="#893b7b"/><rect x="-192" y="864" width="97" height="97" fill="#893b7b"/><rect x="-96" y="864" width="97" height="97" fill="#893b7b"/><rect x="0" y="864" width="97" height="97" fill="#913b7a"/><rect x="96" y="864" width="97" height="97" fill="#a63976"/><rect x="192" y="864" width="97" height="97" fill="#b93872"/><rect x="288" y="864" width="97" height="97" fill="#c8376d"/><rect x="384" y="864" width="97" height="97" fill="#d33764"/><rect x="480" y="864" width="97" height="97" fill="#da365b"/><rect x="576" y="864" width="97" height="97" fill="#de3552"/><rect x="672" y="864" width="97" height="97" fill="#df3550"/><rect x="768" y="864" width="97" height="97" fill="#e03653"/><rect x="864" y="864" width="97" height="97" fill="#e13653"/><rect x="960" y="864" width="97" height="97" fill="#e23651"/><rect x="1056" y="864" width="97" height="97" fill="#e33650"/><rect x="1152" y="864" width="97" height="97" fill="#e4364f"/><rect x="1248" y="864" width="97" height="97" fill="#e7364d"/><rect x="1344" y="864" width="97" height="97" fill="#e9364c"/><rect x="1440" y="864" width="97" height="97" fill="#ec374b"/><rect x="1536" y="864" width="97" height="97" fill="#ef384a"/><rect x="1632" y="864" width="97" height="97" fill="#f13849"/><rect x="1728" y="864" width="97" height="97" fill="#f33848"/><rect x="1824" y="864" width="97" height="97" fill="#f53848"/><rect x="1920" y="864" width="97" height="97" fill="#f63848"/><rect x="2016" y="864" width="97" height="97" fill="#f73847"/><rect x="2112" y="864" width="97" height="97" fill="#f83847"/><rect x="2208" y="864" width="97" height="97" fill="#f83847"/><rect x="2304" y="864" width="97" height="97" fill="#f93847"/><rect x="2400" y="864" width="97" height="97" fill="#f93848"/><rect x="2496" y="864" width="97" height="97" fill="#f93848"/><rect x="2592" y="864" width="97" height="97" fill="#f83848"/><rect x="2688" y="864" width="97" height="97" fill="#f83848"/><rect x="2784" y="864" width="97" height="97" fill="#f73849"/><rect x="2880" y="864" width="97" height="97" fill="#f63849"/><rect x="2976" y="864" width="97" height="97" fill="#f63849"/><rect x="3072" y="864" width="97" height="97" fill="#f63849"/><rect x="-288" y="960" width="97" height="97" fill="#7b3c7c"/><rect x="-192" y="960" width="97" height="97" fill="#7b3c7c"/><rect x="-96" y="960" width="97" height="97" fill="#7b3c7c"/><rect x="0" y="960" width="97" height="97" fill="#833b7c"/><rect x="96" y="960" width="97" height="97" fill="#963a7a"/><rect x="192" y="960" width="97" height="97" fill="#a93978"/><rect x="288" y="960" width="97" height="97" fill="#b83875"/><rect x="384" y="960" width="97" height="97" fill="#c33871"/><rect x="480" y="960" width="97" height="97" fill="#cb376b"/><rect x="576" y="960" width="97" height="97" fill="#d03767"/><rect x="672" y="960" width="97" height="97" fill="#d53762"/><rect x="768" y="960" width="97" height="97" fill="#d7375f"/><rect x="864" y="960" width="97" height="97" fill="#d8375c"/><rect x="960" y="960" width="97" height="97" fill="#da3759"/><rect x="1056" y="960" width="97" height="97" fill="#dd3756"/><rect x="1152" y="960" width="97" height="97" fill="#e13652"/><rect x="1248" y="960" width="97" height="97" fill="#e33650"/><rect x="1344" y="960" width="97" height="97" fill="#e4364f"/><rect x="1440" y="960" width="97" height="97" fill="#e7384e"/><rect x="1536" y="960" width="97" height="97" fill="#ea394d"/><rect x="1632" y="960" width="97" height="97" fill="#ed394b"/><rect x="1728" y="960" width="97" height="97" fill="#ee394b"/><rect x="1824" y="960" width="97" height="97" fill="#f0394a"/><rect x="1920" y="960" width="97" height="97" fill="#f1394a"/><rect x="2016" y="960" width="97" height="97" fill="#f2394a"/><rect x="2112" y="960" width="97" height="97" fill="#f3394a"/><rect x="2208" y="960" width="97" height="97" fill="#f3394a"/><rect x="2304" y="960" width="97" height="97" fill="#f3394a"/><rect x="2400" y="960" width="97" height="97" fill="#f4394a"/><rect x="2496" y="960" width="97" height="97" fill="#f4394a"/><rect x="2592" y="960" width="97" height="97" fill="#f4394a"/><rect x="2688" y="960" width="97" height="97" fill="#f3394a"/><rect x="2784" y="960" width="97" height="97" fill="#f3394b"/><rect x="2880" y="960" width="97" height="97" fill="#f2394b"/><rect x="2976" y="960" width="97" height="97" fill="#f2394b"/><rect x="3072" y="960" width="97" height="97" fill="#f2394b"/><rect x="-288" y="1056" width="97" height="97" fill="#723c7c"/><rect x="-192" y="1056" width="97" height="97" fill="#723c7c"/><rect x="-96" y="1056" width="97" height="97" fill="#723c7c"/><rect x="0" y="1056" width="97" height="97" fill="#783c7c"/><rect x="96" y="1056" width="97" height="97" fill="#893b7c"/><rect x="192" y="1056" width="97" height="97" fill="#9a3a7b"/><rect x="288" y="1056" width="97" height="97" fill="#a6397a"/><rect x="384" y="1056" width="97" height="97" fill="#b13978"/><rect x="480" y="1056" width="97" height="97" fill="#ba3876"/><rect x="576" y="1056" width="97" height="97" fill="#c13876"/><rect x="672" y="1056" width="97" height="97" fill="#c83871"/><rect x="768" y="1056" width="97" height="97" fill="#ca386b"/><rect x="864" y="1056" width="97" height="97" fill="#cc3867"/><rect x="960" y="1056" width="97" height="97" fill="#ce3862"/><rect x="1056" y="1056" width="97" height="97" fill="#d2375f"/><rect x="1152" y="1056" width="97" height="97" fill="#d6375b"/><rect x="1248" y="1056" width="97" height="97" fill="#db3758"/><rect x="1344" y="1056" width="97" height="97" fill="#e23752"/><rect x="1440" y="1056" width="97" height="97" fill="#e33953"/><rect x="1536" y="1056" width="97" height="97" fill="#e63a50"/><rect x="1632" y="1056" width="97" height="97" fill="#e83a4e"/><rect x="1728" y="1056" width="97" height="97" fill="#e93a4e"/><rect x="1824" y="1056" width="97" height="97" fill="#ea3a4e"/><rect x="1920" y="1056" width="97" height="97" fill="#ec3a4d"/><rect x="2016" y="1056" width="97" height="97" fill="#ec394d"/><rect x="2112" y="1056" width="97" height="97" fill="#ed394d"/><rect x="2208" y="1056" width="97" height="97" fill="#ed394c"/><rect x="2304" y="1056" width="97" height="97" fill="#ee394c"/><rect x="2400" y="1056" width="97" height="97" fill="#ee394c"/><rect x="2496" y="1056" width="97" height="97" fill="#ee394c"/><rect x="2592" y="1056" width="97" height="97" fill="#ee394c"/><rect x="2688" y="1056" width="97" height="97" fill="#ee394c"/><rect x="2784" y="1056" width="97" height="97" fill="#ee394d"/><rect x="2880" y="1056" width="97" height="97" fill="#ee394d"/><rect x="2976" y="1056" width="97" height="97" fill="#ee394d"/><rect x="3072" y="1056" width="97" height="97" fill="#ee394d"/><rect x="-288" y="1152" width="97" height="97" fill="#673c7b"/><rect x="-192" y="1152" width="97" height="97" fill="#673c7b"/><rect x="-96" y="1152" width="97" height="97" fill="#673c7b"/><rect x="0" y="1152" width="97" height="97" fill="#6c3c7b"/><rect x="96" y="1152" width="97" height="97" fill="#793b7c"/><rect x="192" y="1152" width="97" height="97" fill="#873b7c"/><rect x="288" y="1152" width="97" height="97" fill="#933a7c"/><rect x="384" y="1152" width="97" height="97" fill="#9e3a7c"/><rect x="480" y="1152" width="97" height="97" fill="#a73a7c"/><rect x="576" y="1152" width="97" height="97" fill="#b0397b"/><rect x="672" y="1152" width="97" height="97" fill="#b73a79"/><rect x="768" y="1152" width="97" height="97" fill="#bb3a75"/><rect x="864" y="1152" width="97" height="97" fill="#bc3a71"/><rect x="960" y="1152" width="97" height="97" fill="#be396c"/><rect x="1056" y="1152" width="97" height="97" fill="#c23969"/><rect x="1152" y="1152" width="97" height="97" fill="#c73867"/><rect x="1248" y="1152" width="97" height="97" fill="#ce3865"/><rect x="1344" y="1152" width="97" height="97" fill="#d53964"/><rect x="1440" y="1152" width="97" height="97" fill="#db3960"/><rect x="1536" y="1152" width="97" height="97" fill="#e33a55"/><rect x="1632" y="1152" width="97" height="97" fill="#e53a52"/><rect x="1728" y="1152" width="97" height="97" fill="#e73a4f"/><rect x="1824" y="1152" width="97" height="97" fill="#e63a50"/><rect x="1920" y="1152" width="97" height="97" fill="#e73a50"/><rect x="2016" y="1152" width="97" height="97" fill="#e73a4f"/><rect x="2112" y="1152" width="97" height="97" fill="#e83a4f"/><rect x="2208" y="1152" width="97" height="97" fill="#e83a4f"/><rect x="2304" y="1152" width="97" height="97" fill="#e83a4f"/><rect x="2400" y="1152" width="97" height="97" fill="#e93a4f"/><rect x="2496" y="1152" width="97" height="97" fill="#e93a4f"/><rect x="2592" y="1152" width="97" height="97" fill="#e93a4f"/><rect x="2688" y="1152" width="97" height="97" fill="#e93a4f"/><rect x="2784" y="1152" width="97" height="97" fill="#e93a4f"/><rect x="2880" y="1152" width="97" height="97" fill="#e93a4f"/><rect x="2976" y="1152" width="97" height="97" fill="#e93a4f"/><rect x="3072" y="1152" width="97" height="97" fill="#e93a4f"/><rect x="-288" y="1248" width="97" height="97" fill="#5b3c79"/><rect x="-192" y="1248" width="97" height="97" fill="#5b3c79"/><rect x="-96" y="1248" width="97" height="97" fill="#5b3c79"/><rect x="0" y="1248" width="97" height="97" fill="#603c7a"/><rect x="96" y="1248" width="97" height="97" fill="#6b3c7b"/><rect x="192" y="1248" width="97" height="97" fill="#763b7c"/><rect x="288" y="1248" width="97" height="97" fill="#803b7c"/><rect x="384" y="1248" width="97" height="97" fill="#8a3b7d"/><rect x="480" y="1248" width="97" height="97" fill="#943b7e"/><rect x="576" y="1248" width="97" height="97" fill="#9d3b7e"/><rect x="672" y="1248" width="97" height="97" fill="#a33b7e"/><rect x="768" y="1248" width="97" height="97" fill="#a83c7d"/><rect x="864" y="1248" width="97" height="97" fill="#a93b78"/><rect x="960" y="1248" width="97" height="97" fill="#ab3b75"/><rect x="1056" y="1248" width="97" height="97" fill="#ae3a72"/><rect x="1152" y="1248" width="97" height="97" fill="#b43a71"/><rect x="1248" y="1248" width="97" height="97" fill="#bc3972"/><rect x="1344" y="1248" width="97" height="97" fill="#c73975"/><rect x="1440" y="1248" width="97" height="97" fill="#cd3871"/><rect x="1536" y="1248" width="97" height="97" fill="#d3386b"/><rect x="1632" y="1248" width="97" height="97" fill="#da3961"/><rect x="1728" y="1248" width="97" height="97" fill="#e13a57"/><rect x="1824" y="1248" width="97" height="97" fill="#e63a50"/><rect x="1920" y="1248" width="97" height="97" fill="#e73a4e"/><rect x="2016" y="1248" width="97" height="97" fill="#e73a4f"/><rect x="2112" y="1248" width="97" height="97" fill="#e73a4e"/><rect x="2208" y="1248" width="97" height="97" fill="#e73a4f"/><rect x="2304" y="1248" width="97" height="97" fill="#e73a4f"/><rect x="2400" y="1248" width="97" height="97" fill="#e63a4f"/><rect x="2496" y="1248" width="97" height="97" fill="#e63a4f"/><rect x="2592" y="1248" width="97" height="97" fill="#e63a50"/><rect x="2688" y="1248" width="97" height="97" fill="#e63a50"/><rect x="2784" y="1248" width="97" height="97" fill="#e63a50"/><rect x="2880" y="1248" width="97" height="97" fill="#e63a50"/><rect x="2976" y="1248" width="97" height="97" fill="#e63a50"/><rect x="3072" y="1248" width="97" height="97" fill="#e63a50"/><rect x="-288" y="1344" width="97" height="97" fill="#513d77"/><rect x="-192" y="1344" width="97" height="97" fill="#513d77"/><rect x="-96" y="1344" width="97" height="97" fill="#513d77"/><rect x="0" y="1344" width="97" height="97" fill="#553d78"/><rect x="96" y="1344" width="97" height="97" fill="#5d3d79"/><rect x="192" y="1344" width="97" height="97" fill="#663c7a"/><rect x="288" y="1344" width="97" height="97" fill="#6e3c7c"/><rect x="384" y="1344" width="97" height="97" fill="#783c7d"/><rect x="480" y="1344" width="97" height="97" fill="#813d7f"/><rect x="576" y="1344" width="97" height="97" fill="#873d7f"/><rect x="672" y="1344" width="97" height="97" fill="#8a3d80"/><rect x="768" y="1344" width="97" height="97" fill="#8f3d7f"/><rect x="864" y="1344" width="97" height="97" fill="#923d7d"/><rect x="960" y="1344" width="97" height="97" fill="#943c7b"/><rect x="1056" y="1344" width="97" height="97" fill="#973c79"/><rect x="1152" y="1344" width="97" height="97" fill="#9c3c79"/><rect x="1248" y="1344" width="97" height="97" fill="#a33b7a"/><rect x="1344" y="1344" width="97" height="97" fill="#ad3b7c"/><rect x="1440" y="1344" width="97" height="97" fill="#b53a7c"/><rect x="1536" y="1344" width="97" height="97" fill="#bf397a"/><rect x="1632" y="1344" width="97" height="97" fill="#c73a74"/><rect x="1728" y="1344" width="97" height="97" fill="#cb3a70"/><rect x="1824" y="1344" width="97" height="97" fill="#ce3a70"/><rect x="1920" y="1344" width="97" height="97" fill="#d53a64"/><rect x="2016" y="1344" width="97" height="97" fill="#d73a64"/><rect x="2112" y="1344" width="97" height="97" fill="#dd3a5e"/><rect x="2208" y="1344" width="97" height="97" fill="#e33958"/><rect x="2304" y="1344" width="97" height="97" fill="#e13a57"/><rect x="2400" y="1344" width="97" height="97" fill="#e43a54"/><rect x="2496" y="1344" width="97" height="97" fill="#e73a50"/><rect x="2592" y="1344" width="97" height="97" fill="#e53a52"/><rect x="2688" y="1344" width="97" height="97" fill="#e53a51"/><rect x="2784" y="1344" width="97" height="97" fill="#e73c4f"/><rect x="2880" y="1344" width="97" height="97" fill="#e63b4f"/><rect x="2976" y="1344" width="97" height="97" fill="#e63b4f"/><rect x="3072" y="1344" width="97" height="97" fill="#e63b4f"/><rect x="-288" y="1440" width="97" height="97" fill="#473d74"/><rect x="-192" y="1440" width="97" height="97" fill="#473d74"/><rect x="-96" y="1440" width="97" height="97" fill="#473d74"/><rect x="0" y="1440" width="97" height="97" fill="#493d75"/><rect x="96" y="1440" width="97" height="97" fill="#503d76"/><rect x="192" y="1440" width="97" height="97" fill="#593d78"/><rect x="288" y="1440" width="97" height="97" fill="#623e7b"/><rect x="384" y="1440" width="97" height="97" fill="#693e7d"/><rect x="480" y="1440" width="97" height="97" fill="#6f3f7e"/><rect x="576" y="1440" width="97" height="97" fill="#743f7f"/><rect x="672" y="1440" width="97" height="97" fill="#773f80"/><rect x="768" y="1440" width="97" height="97" fill="#7a3f7f"/><rect x="864" y="1440" width="97" height="97" fill="#7c3f7e"/><rect x="960" y="1440" width="97" height="97" fill="#7c3e7e"/><rect x="1056" y="1440" width="97" height="97" fill="#7d3e7d"/><rect x="1152" y="1440" width="97" height="97" fill="#813e7c"/><rect x="1248" y="1440" width="97" height="97" fill="#853e7d"/><rect x="1344" y="1440" width="97" height="97" fill="#8a3e7e"/><rect x="1440" y="1440" width="97" height="97" fill="#903c7e"/><rect x="1536" y="1440" width="97" height="97" fill="#a93c7f"/><rect x="1632" y="1440" width="97" height="97" fill="#b03c7e"/><rect x="1728" y="1440" width="97" height="97" fill="#af3c7d"/><rect x="1824" y="1440" width="97" height="97" fill="#b23c7c"/><rect x="1920" y="1440" width="97" height="97" fill="#b83c79"/><rect x="2016" y="1440" width="97" height="97" fill="#bf3b7a"/><rect x="2112" y="1440" width="97" height="97" fill="#c43c77"/><rect x="2208" y="1440" width="97" height="97" fill="#c83c76"/><rect x="2304" y="1440" width="97" height="97" fill="#c93c73"/><rect x="2400" y="1440" width="97" height="97" fill="#d23c69"/><rect x="2496" y="1440" width="97" height="97" fill="#d93b62"/><rect x="2592" y="1440" width="97" height="97" fill="#d63c5f"/><rect x="2688" y="1440" width="97" height="97" fill="#d93b5a"/><rect x="2784" y="1440" width="97" height="97" fill="#e33954"/><rect x="2880" y="1440" width="97" height="97" fill="#e13954"/><rect x="2976" y="1440" width="97" height="97" fill="#e13954"/><rect x="3072" y="1440" width="97" height="97" fill="#e13954"/><rect x="-288" y="1536" width="97" height="97" fill="#3a3e70"/><rect x="-192" y="1536" width="97" height="97" fill="#3a3e70"/><rect x="-96" y="1536" width="97" height="97" fill="#3a3e70"/><rect x="0" y="1536" width="97" height="97" fill="#3c3e70"/><rect x="96" y="1536" width="97" height="97" fill="#423e72"/><rect x="192" y="1536" width="97" height="97" fill="#4b3f76"/><rect x="288" y="1536" width="97" height="97" fill="#563f7a"/><rect x="384" y="1536" width="97" height="97" fill="#5a407c"/><rect x="480" y="1536" width="97" height="97" fill="#5d417d"/><rect x="576" y="1536" width="97" height="97" fill="#61417e"/><rect x="672" y="1536" width="97" height="97" fill="#66417f"/><rect x="768" y="1536" width="97" height="97" fill="#6a407f"/><rect x="864" y="1536" width="97" height="97" fill="#67417e"/><rect x="960" y="1536" width="97" height="97" fill="#64417d"/><rect x="1056" y="1536" width="97" height="97" fill="#63417c"/><rect x="1152" y="1536" width="97" height="97" fill="#66417d"/><rect x="1248" y="1536" width="97" height="97" fill="#68417d"/><rect x="1344" y="1536" width="97" height="97" fill="#68417d"/><rect x="1440" y="1536" width="97" height="97" fill="#72407e"/><rect x="1536" y="1536" width="97" height="97" fill="#893e80"/><rect x="1632" y="1536" width="97" height="97" fill="#8e3f80"/><rect x="1728" y="1536" width="97" height="97" fill="#8c4080"/><rect x="1824" y="1536" width="97" height="97" fill="#8f3f80"/><rect x="1920" y="1536" width="97" height="97" fill="#953e80"/><rect x="2016" y="1536" width="97" height="97" fill="#9b3d80"/><rect x="2112" y="1536" width="97" height="97" fill="#9e3e7f"/><rect x="2208" y="1536" width="97" height="97" fill="#a63f7f"/><rect x="2304" y="1536" width="97" height="97" fill="#ae3e7e"/><rect x="2400" y="1536" width="97" height="97" fill="#b13e7b"/><rect x="2496" y="1536" width="97" height="97" fill="#b63f78"/><rect x="2592" y="1536" width="97" height="97" fill="#b63f6f"/><rect x="2688" y="1536" width="97" height="97" fill="#bb3e6a"/><rect x="2784" y="1536" width="97" height="97" fill="#c43d69"/><rect x="2880" y="1536" width="97" height="97" fill="#c43d68"/><rect x="2976" y="1536" width="97" height="97" fill="#c43d68"/><rect x="3072" y="1536" width="97" height="97" fill="#c43d68"/><rect x="-288" y="1632" width="97" height="97" fill="#2c3e6b"/><rect x="-192" y="1632" width="97" height="97" fill="#2c3e6b"/><rect x="-96" y="1632" width="97" height="97" fill="#2c3e6b"/><rect x="0" y="1632" width="97" height="97" fill="#2d3e6b"/><rect x="96" y="1632" width="97" height="97" fill="#313e6d"/><rect x="192" y="1632" width="97" height="97" fill="#394072"/><rect x="288" y="1632" width="97" height="97" fill="#424277"/><rect x="384" y="1632" width="97" height="97" fill="#46437a"/><rect x="480" y="1632" width="97" height="97" fill="#48447c"/><rect x="576" y="1632" width="97" height="97" fill="#4b447d"/><rect x="672" y="1632" width="97" height="97" fill="#51447d"/><rect x="768" y="1632" width="97" height="97" fill="#59437e"/><rect x="864" y="1632" width="97" height="97" fill="#51447d"/><rect x="960" y="1632" width="97" height="97" fill="#4b447b"/><rect x="1056" y="1632" width="97" height="97" fill="#4a447b"/><rect x="1152" y="1632" width="97" height="97" fill="#4e437c"/><rect x="1248" y="1632" width="97" height="97" fill="#4f447d"/><rect x="1344" y="1632" width="97" height="97" fill="#51447c"/><rect x="1440" y="1632" width="97" height="97" fill="#52447c"/><rect x="1536" y="1632" width="97" height="97" fill="#61427f"/><rect x="1632" y="1632" width="97" height="97" fill="#5f447f"/><rect x="1728" y="1632" width="97" height="97" fill="#63447f"/><rect x="1824" y="1632" width="97" height="97" fill="#694380"/><rect x="1920" y="1632" width="97" height="97" fill="#6e4281"/><rect x="2016" y="1632" width="97" height="97" fill="#6f4080"/><rect x="2112" y="1632" width="97" height="97" fill="#6c437f"/><rect x="2208" y="1632" width="97" height="97" fill="#75427f"/><rect x="2304" y="1632" width="97" height="97" fill="#824180"/><rect x="2400" y="1632" width="97" height="97" fill="#824380"/><rect x="2496" y="1632" width="97" height="97" fill="#83437d"/><rect x="2592" y="1632" width="97" height="97" fill="#894378"/><rect x="2688" y="1632" width="97" height="97" fill="#914375"/><rect x="2784" y="1632" width="97" height="97" fill="#984374"/><rect x="2880" y="1632" width="97" height="97" fill="#994372"/><rect x="2976" y="1632" width="97" height="97" fill="#994372"/><rect x="3072" y="1632" width="97" height="97" fill="#994372"/><rect x="-288" y="1728" width="97" height="97" fill="#203e66"/><rect x="-192" y="1728" width="97" height="97" fill="#203e66"/><rect x="-96" y="1728" width="97" height="97" fill="#203e66"/><rect x="0" y="1728" width="97" height="97" fill="#1f3e66"/><rect x="96" y="1728" width="97" height="97" fill="#203f68"/><rect x="192" y="1728" width="97" height="97" fill="#28426f"/><rect x="288" y="1728" width="97" height="97" fill="#2d4575"/><rect x="384" y="1728" width="97" height="97" fill="#324679"/><rect x="480" y="1728" width="97" height="97" fill="#34477a"/><rect x="576" y="1728" width="97" height="97" fill="#33487b"/><rect x="672" y="1728" width="97" height="97" fill="#314779"/><rect x="768" y="1728" width="97" height="97" fill="#39477b"/><rect x="864" y="1728" width="97" height="97" fill="#38487c"/><rect x="960" y="1728" width="97" height="97" fill="#34497c"/><rect x="1056" y="1728" width="97" height="97" fill="#35487c"/><rect x="1152" y="1728" width="97" height="97" fill="#38477c"/><rect x="1248" y="1728" width="97" height="97" fill="#39477d"/><rect x="1344" y="1728" width="97" height="97" fill="#39487e"/><rect x="1440" y="1728" width="97" height="97" fill="#3c487e"/><rect x="1536" y="1728" width="97" height="97" fill="#40477f"/><rect x="1632" y="1728" width="97" height="97" fill="#40487e"/><rect x="1728" y="1728" width="97" height="97" fill="#41497e"/><rect x="1824" y="1728" width="97" height="97" fill="#474880"/><rect x="1920" y="1728" width="97" height="97" fill="#4b4681"/><rect x="2016" y="1728" width="97" height="97" fill="#4a4781"/><rect x="2112" y="1728" width="97" height="97" fill="#464980"/><rect x="2208" y="1728" width="97" height="97" fill="#494980"/><rect x="2304" y="1728" width="97" height="97" fill="#534881"/><rect x="2400" y="1728" width="97" height="97" fill="#524981"/><rect x="2496" y="1728" width="97" height="97" fill="#4f4a7f"/><rect x="2592" y="1728" width="97" height="97" fill="#5d487d"/><rect x="2688" y="1728" width="97" height="97" fill="#66487a"/><rect x="2784" y="1728" width="97" height="97" fill="#694778"/><rect x="2880" y="1728" width="97" height="97" fill="#6c4776"/><rect x="2976" y="1728" width="97" height="97" fill="#6c4776"/><rect x="3072" y="1728" width="97" height="97" fill="#6c4776"/><rect x="-288" y="1824" width="97" height="97" fill="#1d3e66"/><rect x="-192" y="1824" width="97" height="97" fill="#1d3e66"/><rect x="-96" y="1824" width="97" height="97" fill="#1d3e66"/><rect x="0" y="1824" width="97" height="97" fill="#1c3e66"/><rect x="96" y="1824" width="97" height="97" fill="#1d4068"/><rect x="192" y="1824" width="97" height="97" fill="#24436f"/><rect x="288" y="1824" width="97" height="97" fill="#294675"/><rect x="384" y="1824" width="97" height="97" fill="#2d4778"/><rect x="480" y="1824" width="97" height="97" fill="#2f487a"/><rect x="576" y="1824" width="97" height="97" fill="#2e497b"/><rect x="672" y="1824" width="97" height="97" fill="#2a4879"/><rect x="768" y="1824" width="97" height="97" fill="#32487b"/><rect x="864" y="1824" width="97" height="97" fill="#32497c"/><rect x="960" y="1824" width="97" height="97" fill="#2e4a7c"/><rect x="1056" y="1824" width="97" height="97" fill="#31497c"/><rect x="1152" y="1824" width="97" height="97" fill="#33487d"/><rect x="1248" y="1824" width="97" height="97" fill="#34487d"/><rect x="1344" y="1824" width="97" height="97" fill="#34497e"/><rect x="1440" y="1824" width="97" height="97" fill="#37487e"/><rect x="1536" y="1824" width="97" height="97" fill="#3a487f"/><rect x="1632" y="1824" width="97" height="97" fill="#3a497f"/><rect x="1728" y="1824" width="97" height="97" fill="#3a4a7e"/><rect x="1824" y="1824" width="97" height="97" fill="#3f4980"/><rect x="1920" y="1824" width="97" height="97" fill="#434881"/><rect x="2016" y="1824" width="97" height="97" fill="#424881"/><rect x="2112" y="1824" width="97" height="97" fill="#3f4b80"/><rect x="2208" y="1824" width="97" height="97" fill="#414b80"/><rect x="2304" y="1824" width="97" height="97" fill="#494a81"/><rect x="2400" y="1824" width="97" height="97" fill="#484a81"/><rect x="2496" y="1824" width="97" height="97" fill="#454b80"/><rect x="2592" y="1824" width="97" height="97" fill="#544a7e"/><rect x="2688" y="1824" width="97" height="97" fill="#5d497b"/><rect x="2784" y="1824" width="97" height="97" fill="#5f4879"/><rect x="2880" y="1824" width="97" height="97" fill="#634877"/><rect x="2976" y="1824" width="97" height="97" fill="#634877"/><rect x="3072" y="1824" width="97" height="97" fill="#634877"/><rect x="-288" y="1920" width="97" height="97" fill="#1d3e66"/><rect x="-192" y="1920" width="97" height="97" fill="#1d3e66"/><rect x="-96" y="1920" width="97" height="97" fill="#1d3e66"/><rect x="0" y="1920" width="97" height="97" fill="#1c3e66"/><rect x="96" y="1920" width="97" height="97" fill="#1d4068"/><rect x="192" y="1920" width="97" height="97" fill="#24436f"/><rect x="288" y="1920" width="97" height="97" fill="#294675"/><rect x="384" y="1920" width="97" height="97" fill="#2d4778"/><rect x="480" y="1920" width="97" height="97" fill="#2f487a"/><rect x="576" y="1920" width="97" height="97" fill="#2e497b"/><rect x="672" y="1920" width="97" height="97" fill="#2a4879"/><rect x="768" y="1920" width="97" height="97" fill="#32487b"/><rect x="864" y="1920" width="97" height="97" fill="#32497c"/><rect x="960" y="1920" width="97" height="97" fill="#2e4a7c"/><rect x="1056" y="1920" width="97" height="97" fill="#31497c"/><rect x="1152" y="1920" width="97" height="97" fill="#33487d"/><rect x="1248" y="1920" width="97" height="97" fill="#34487d"/><rect x="1344" y="1920" width="97" height="97" fill="#34497e"/><rect x="1440" y="1920" width="97" height="97" fill="#37487e"/><rect x="1536" y="1920" width="97" height="97" fill="#3a487f"/><rect x="1632" y="1920" width="97" height="97" fill="#3a497f"/><rect x="1728" y="1920" width="97" height="97" fill="#3a4a7e"/><rect x="1824" y="1920" width="97" height="97" fill="#3f4980"/><rect x="1920" y="1920" width="97" height="97" fill="#434881"/><rect x="2016" y="1920" width="97" height="97" fill="#424881"/><rect x="2112" y="1920" width="97" height="97" fill="#3f4b80"/><rect x="2208" y="1920" width="97" height="97" fill="#414b80"/><rect x="2304" y="1920" width="97" height="97" fill="#494a81"/><rect x="2400" y="1920" width="97" height="97" fill="#484a81"/><rect x="2496" y="1920" width="97" height="97" fill="#454b80"/><rect x="2592" y="1920" width="97" height="97" fill="#544a7e"/><rect x="2688" y="1920" width="97" height="97" fill="#5d497b"/><rect x="2784" y="1920" width="97" height="97" fill="#5f4879"/><rect x="2880" y="1920" width="97" height="97" fill="#634877"/><rect x="2976" y="1920" width="97" height="97" fill="#634877"/><rect x="3072" y="1920" width="97" height="97" fill="#634877"/><rect x="-288" y="2016" width="97" height="97" fill="#1d3e66"/><rect x="-192" y="2016" width="97" height="97" fill="#1d3e66"/><rect x="-96" y="2016" width="97" height="97" fill="#1d3e66"/><rect x="0" y="2016" width="97" height="97" fill="#1c3e66"/><rect x="96" y="2016" width="97" height="97" fill="#1d4068"/><rect x="192" y="2016" width="97" height="97" fill="#24436f"/><rect x="288" y="2016" width="97" height="97" fill="#294675"/><rect x="384" y="2016" width="97" height="97" fill="#2d4778"/><rect x="480" y="2016" width="97" height="97" fill="#2f487a"/><rect x="576" y="2016" width="97" height="97" fill="#2e497b"/><rect x="672" y="2016" width="97" height="97" fill="#2a4879"/><rect x="768" y="2016" width="97" height="97" fill="#32487b"/><rect x="864" y="2016" width="97" height="97" fill="#32497c"/><rect x="960" y="2016" width="97" height="97" fill="#2e4a7c"/><rect x="1056" y="2016" width="97" height="97" fill="#31497c"/><rect x="1152" y="2016" width="97" height="97" fill="#33487d"/><rect x="1248" y="2016" width="97" height="97" fill="#34487d"/><rect x="1344" y="2016" width="97" height="97" fill="#34497e"/><rect x="1440" y="2016" width="97" height="97" fill="#37487e"/><rect x="1536" y="2016" width="97" height="97" fill="#3a487f"/><rect x="1632" y="2016" width="97" height="97" fill="#3a497f"/><rect x="1728" y="2016" width="97" height="97" fill="#3a4a7e"/><rect x="1824" y="2016" width="97" height="97" fill="#3f4980"/><rect x="1920" y="2016" width="97" height="97" fill="#434881"/><rect x="2016" y="2016" width="97" height="97" fill="#424881"/><rect x="2112" y="2016" width="97" height="97" fill="#3f4b80"/><rect x="2208" y="2016" width="97" height="97" fill="#414b80"/><rect x="2304" y="2016" width="97" height="97" fill="#494a81"/><rect x="2400" y="2016" width="97" height="97" fill="#484a81"/><rect x="2496" y="2016" width="97" height="97" fill="#454b80"/><rect x="2592" y="2016" width="97" height="97" fill="#544a7e"/><rect x="2688" y="2016" width="97" height="97" fill="#5d497b"/><rect x="2784" y="2016" width="97" height="97" fill="#5f4879"/><rect x="2880" y="2016" width="97" height="97" fill="#634877"/><rect x="2976" y="2016" width="97" height="97" fill="#634877"/><rect x="3072" y="2016" width="97" height="97" fill="#634877"/></g>
<g filter="url(#fe)"><g clip-path="url(#cpb1)"><g filter="url(#fb)" class="mz"><rect x="-288" y="-288" width="97" height="97" fill="#d74d6f"/><rect x="-192" y="-288" width="97" height="97" fill="#d74d6f"/><rect x="-96" y="-288" width="97" height="97" fill="#d74d6f"/><rect x="0" y="-288" width="97" height="97" fill="#d74c6f"/><rect x="96" y="-288" width="97" height="97" fill="#d74b70"/><rect x="192" y="-288" width="97" height="97" fill="#d9496f"/><rect x="288" y="-288" width="97" height="97" fill="#da486e"/><rect x="384" y="-288" width="97" height="97" fill="#db486d"/><rect x="480" y="-288" width="97" height="97" fill="#dc486d"/><rect x="576" y="-288" width="97" height="97" fill="#dd486b"/><rect x="672" y="-288" width="97" height="97" fill="#dd476a"/><rect x="768" y="-288" width="97" height="97" fill="#dd486a"/><rect x="864" y="-288" width="97" height="97" fill="#dd496a"/><rect x="960" y="-288" width="97" height="97" fill="#dd496a"/><rect x="1056" y="-288" width="97" height="97" fill="#dd496a"/><rect x="1152" y="-288" width="97" height="97" fill="#de4a6b"/><rect x="1248" y="-288" width="97" height="97" fill="#de4b6c"/><rect x="1344" y="-288" width="97" height="97" fill="#df4d6c"/><rect x="1440" y="-288" width="97" height="97" fill="#e04e6d"/><rect x="1536" y="-288" width="97" height="97" fill="#e04f6c"/><rect x="1632" y="-288" width="97" height="97" fill="#e0506c"/><rect x="1728" y="-288" width="97" height="97" fill="#e1516c"/><rect x="1824" y="-288" width="97" height="97" fill="#e1526c"/><rect x="1920" y="-288" width="97" height="97" fill="#e1536c"/><rect x="2016" y="-288" width="97" height="97" fill="#e1546b"/><rect x="2112" y="-288" width="97" height="97" fill="#e15569"/><rect x="2208" y="-288" width="97" height="97" fill="#e25768"/><rect x="2304" y="-288" width="97" height="97" fill="#e25767"/><rect x="2400" y="-288" width="97" height="97" fill="#e25867"/><rect x="2496" y="-288" width="97" height="97" fill="#e25767"/><rect x="2592" y="-288" width="97" height="97" fill="#e25768"/><rect x="2688" y="-288" width="97" height="97" fill="#e25669"/><rect x="2784" y="-288" width="97" height="97" fill="#e1556b"/><rect x="2880" y="-288" width="97" height="97" fill="#e1546b"/><rect x="2976" y="-288" width="97" height="97" fill="#e1546b"/><rect x="3072" y="-288" width="97" height="97" fill="#e1546b"/><rect x="-288" y="-192" width="97" height="97" fill="#d74d6f"/><rect x="-192" y="-192" width="97" height="97" fill="#d74d6f"/><rect x="-96" y="-192" width="97" height="97" fill="#d74d6f"/><rect x="0" y="-192" width="97" height="97" fill="#d74c6f"/><rect x="96" y="-192" width="97" height="97" fill="#d74b70"/><rect x="192" y="-192" width="97" height="97" fill="#d9496f"/><rect x="288" y="-192" width="97" height="97" fill="#da486e"/><rect x="384" y="-192" width="97" height="97" fill="#db486d"/><rect x="480" y="-192" width="97" height="97" fill="#dc486d"/><rect x="576" y="-192" width="97" height="97" fill="#dd486b"/><rect x="672" y="-192" width="97" height="97" fill="#dd476a"/><rect x="768" y="-192" width="97" height="97" fill="#dd486a"/><rect x="864" y="-192" width="97" height="97" fill="#dd496a"/><rect x="960" y="-192" width="97" height="97" fill="#dd496a"/><rect x="1056" y="-192" width="97" height="97" fill="#dd496a"/><rect x="1152" y="-192" width="97" height="97" fill="#de4a6b"/><rect x="1248" y="-192" width="97" height="97" fill="#de4b6c"/><rect x="1344" y="-192" width="97" height="97" fill="#df4d6c"/><rect x="1440" y="-192" width="97" height="97" fill="#e04e6d"/><rect x="1536" y="-192" width="97" height="97" fill="#e04f6c"/><rect x="1632" y="-192" width="97" height="97" fill="#e0506c"/><rect x="1728" y="-192" width="97" height="97" fill="#e1516c"/><rect x="1824" y="-192" width="97" height="97" fill="#e1526c"/><rect x="1920" y="-192" width="97" height="97" fill="#e1536c"/><rect x="2016" y="-192" width="97" height="97" fill="#e1546b"/><rect x="2112" y="-192" width="97" height="97" fill="#e15569"/><rect x="2208" y="-192" width="97" height="97" fill="#e25768"/><rect x="2304" y="-192" width="97" height="97" fill="#e25767"/><rect x="2400" y="-192" width="97" height="97" fill="#e25867"/><rect x="2496" y="-192" width="97" height="97" fill="#e25767"/><rect x="2592" y="-192" width="97" height="97" fill="#e25768"/><rect x="2688" y="-192" width="97" height="97" fill="#e25669"/><rect x="2784" y="-192" width="97" height="97" fill="#e1556b"/><rect x="2880" y="-192" width="97" height="97" fill="#e1546b"/><rect x="2976" y="-192" width="97" height="97" fill="#e1546b"/><rect x="3072" y="-192" width="97" height="97" fill="#e1546b"/><rect x="-288" y="-96" width="97" height="97" fill="#d74d6f"/><rect x="-192" y="-96" width="97" height="97" fill="#d74d6f"/><rect x="-96" y="-96" width="97" height="97" fill="#d74d6f"/><rect x="0" y="-96" width="97" height="97" fill="#d74c6f"/><rect x="96" y="-96" width="97" height="97" fill="#d74b70"/><rect x="192" y="-96" width="97" height="97" fill="#d9496f"/><rect x="288" y="-96" width="97" height="97" fill="#da486e"/><rect x="384" y="-96" width="97" height="97" fill="#db486d"/><rect x="480" y="-96" width="97" height="97" fill="#dc486d"/><rect x="576" y="-96" width="97" height="97" fill="#dd486b"/><rect x="672" y="-96" width="97" height="97" fill="#dd476a"/><rect x="768" y="-96" width="97" height="97" fill="#dd486a"/><rect x="864" y="-96" width="97" height="97" fill="#dd496a"/><rect x="960" y="-96" width="97" height="97" fill="#dd496a"/><rect x="1056" y="-96" width="97" height="97" fill="#dd496a"/><rect x="1152" y="-96" width="97" height="97" fill="#de4a6b"/><rect x="1248" y="-96" width="97" height="97" fill="#de4b6c"/><rect x="1344" y="-96" width="97" height="97" fill="#df4d6c"/><rect x="1440" y="-96" width="97" height="97" fill="#e04e6d"/><rect x="1536" y="-96" width="97" height="97" fill="#e04f6c"/><rect x="1632" y="-96" width="97" height="97" fill="#e0506c"/><rect x="1728" y="-96" width="97" height="97" fill="#e1516c"/><rect x="1824" y="-96" width="97" height="97" fill="#e1526c"/><rect x="1920" y="-96" width="97" height="97" fill="#e1536c"/><rect x="2016" y="-96" width="97" height="97" fill="#e1546b"/><rect x="2112" y="-96" width="97" height="97" fill="#e15569"/><rect x="2208" y="-96" width="97" height="97" fill="#e25768"/><rect x="2304" y="-96" width="97" height="97" fill="#e25767"/><rect x="2400" y="-96" width="97" height="97" fill="#e25867"/><rect x="2496" y="-96" width="97" height="97" fill="#e25767"/><rect x="2592" y="-96" width="97" height="97" fill="#e25768"/><rect x="2688" y="-96" width="97" height="97" fill="#e25669"/><rect x="2784" y="-96" width="97" height="97" fill="#e1556b"/><rect x="2880" y="-96" width="97" height="97" fill="#e1546b"/><rect x="2976" y="-96" width="97" height="97" fill="#e1546b"/><rect x="3072" y="-96" width="97" height="97" fill="#e1546b"/><rect x="-288" y="0" width="97" height="97" fill="#d8506e"/><rect x="-192" y="0" width="97" height="97" fill="#d8506e"/><rect x="-96" y="0" width="97" height="97" fill="#d8506e"/><rect x="0" y="0" width="97" height="97" fill="#d9516d"/><rect x="96" y="0" width="97" height="97" fill="#d94e6e"/><rect x="192" y="0" width="97" height="97" fill="#da4d6d"/><rect x="288" y="0" width="97" height="97" fill="#db4a6d"/><rect x="384" y="0" width="97" height="97" fill="#dc4a6d"/><rect x="480" y="0" width="97" height="97" fill="#dd4b6c"/><rect x="576" y="0" width="97" height="97" fill="#de4a6a"/><rect x="672" y="0" width="97" height="97" fill="#de4969"/><rect x="768" y="0" width="97" height="97" fill="#de4a69"/><rect x="864" y="0" width="97" height="97" fill="#de4b69"/><rect x="960" y="0" width="97" height="97" fill="#de4b69"/><rect x="1056" y="0" width="97" height="97" fill="#de4a69"/><rect x="1152" y="0" width="97" height="97" fill="#de4c6a"/><rect x="1248" y="0" width="97" height="97" fill="#df4d6b"/><rect x="1344" y="0" width="97" height="97" fill="#e04e6c"/><rect x="1440" y="0" width="97" height="97" fill="#e0506c"/><rect x="1536" y="0" width="97" height="97" fill="#e1516c"/><rect x="1632" y="0" width="97" height="97" fill="#e1526b"/><rect x="1728" y="0" width="97" height="97" fill="#e1536b"/><rect x="1824" y="0" width="97" height="97" fill="#e1546b"/><rect x="1920" y="0" width="97" height="97" fill="#e1546b"/><rect x="2016" y="0" width="97" height="97" fill="#e2566a"/><rect x="2112" y="0" width="97" height="97" fill="#e25768"/><rect x="2208" y="0" width="97" height="97" fill="#e25866"/><rect x="2304" y="0" width="97" height="97" fill="#e25965"/><rect x="2400" y="0" width="97" height="97" fill="#e25965"/><rect x="2496" y="0" width="97" height="97" fill="#e25965"/><rect x="2592" y="0" width="97" height="97" fill="#e25866"/><rect x="2688" y="0" width="97" height="97" fill="#e25768"/><rect x="2784" y="0" width="97" height="97" fill="#e2566a"/><rect x="2880" y="0" width="97" height="97" fill="#e2556b"/><rect x="2976" y="0" width="97" height="97" fill="#e2556b"/><rect x="3072" y="0" width="97" height="97" fill="#e2556b"/><rect x="-288" y="96" width="97" height="97" fill="#e46161"/><rect x="-192" y="96" width="97" height="97" fill="#e46161"/><rect x="-96" y="96" width="97" height="97" fill="#e46161"/><rect x="0" y="96" width="97" height="97" fill="#e46260"/><rect x="96" y="96" width="97" height="97" fill="#e15d64"/><rect x="192" y="96" width="97" height="97" fill="#e05768"/><rect x="288" y="96" width="97" height="97" fill="#df536b"/><rect x="384" y="96" width="97" height="97" fill="#df526c"/><rect x="480" y="96" width="97" height="97" fill="#e0526b"/><rect x="576" y="96" width="97" height="97" fill="#e1516a"/><rect x="672" y="96" width="97" height="97" fill="#e15068"/><rect x="768" y="96" width="97" height="97" fill="#e15168"/><rect x="864" y="96" width="97" height="97" fill="#e05168"/><rect x="960" y="96" width="97" height="97" fill="#e05068"/><rect x="1056" y="96" width="97" height="97" fill="#df4f68"/><rect x="1152" y="96" width="97" height="97" fill="#e05069"/><rect x="1248" y="96" width="97" height="97" fill="#e0516a"/><rect x="1344" y="96" width="97" height="97" fill="#e1526b"/><rect x="1440" y="96" width="97" height="97" fill="#e2536b"/><rect x="1536" y="96" width="97" height="97" fill="#e2546a"/><rect x="1632" y="96" width="97" height="97" fill="#e25669"/><rect x="1728" y="96" width="97" height="97" fill="#e25769"/><rect x="1824" y="96" width="97" height="97" fill="#e25868"/><rect x="1920" y="96" width="97" height="97" fill="#e35868"/><rect x="2016" y="96" width="97" height="97" fill="#e35a66"/><rect x="2112" y="96" width="97" height="97" fill="#e35b64"/><rect x="2208" y="96" width="97" height="97" fill="#e35c63"/><rect x="2304" y="96" width="97" height="97" fill="#e35d62"/><rect x="2400" y="96" width="97" height="97" fill="#e35d61"/><rect x="2496" y="96" width="97" height="97" fill="#e35d61"/><rect x="2592" y="96" width="97" height="97" fill="#e35c63"/><rect x="2688" y="96" width="97" height="97" fill="#e35b64"/><rect x="2784" y="96" width="97" height="97" fill="#e35967"/><rect x="2880" y="96" width="97" height="97" fill="#e35968"/><rect x="2976" y="96" width="97" height="97" fill="#e35968"/><rect x="3072" y="96" width="97" height="97" fill="#e35968"/><rect x="-288" y="192" width="97" height="97" fill="#e8655c"/><rect x="-192" y="192" width="97" height="97" fill="#e8655c"/><rect x="-96" y="192" width="97" height="97" fill="#e8655c"/><rect x="0" y="192" width="97" height="97" fill="#e9685a"/><rect x="96" y="192" width="97" height="97" fill="#e8675d"/><rect x="192" y="192" width="97" height="97" fill="#e56264"/><rect x="288" y="192" width="97" height="97" fill="#e25d6a"/><rect x="384" y="192" width="97" height="97" fill="#e25c6c"/><rect x="480" y="192" width="97" height="97" fill="#e35c6b"/><rect x="576" y="192" width="97" height="97" fill="#e45c6a"/><rect x="672" y="192" width="97" height="97" fill="#e45b69"/><rect x="768" y="192" width="97" height="97" fill="#e35a68"/><rect x="864" y="192" width="97" height="97" fill="#e35867"/><rect x="960" y="192" width="97" height="97" fill="#e25667"/><rect x="1056" y="192" width="97" height="97" fill="#e25567"/><rect x="1152" y="192" width="97" height="97" fill="#e25568"/><rect x="1248" y="192" width="97" height="97" fill="#e25569"/><rect x="1344" y="192" width="97" height="97" fill="#e3556a"/><rect x="1440" y="192" width="97" height="97" fill="#e3566a"/><rect x="1536" y="192" width="97" height="97" fill="#e35868"/><rect x="1632" y="192" width="97" height="97" fill="#e35967"/><rect x="1728" y="192" width="97" height="97" fill="#e45b65"/><rect x="1824" y="192" width="97" height="97" fill="#e45c64"/><rect x="1920" y="192" width="97" height="97" fill="#e45d63"/><rect x="2016" y="192" width="97" height="97" fill="#e45f62"/><rect x="2112" y="192" width="97" height="97" fill="#e46060"/><rect x="2208" y="192" width="97" height="97" fill="#e4615e"/><rect x="2304" y="192" width="97" height="97" fill="#e4625d"/><rect x="2400" y="192" width="97" height="97" fill="#e5625d"/><rect x="2496" y="192" width="97" height="97" fill="#e5625d"/><rect x="2592" y="192" width="97" height="97" fill="#e4615e"/><rect x="2688" y="192" width="97" height="97" fill="#e46060"/><rect x="2784" y="192" width="97" height="97" fill="#e45f62"/><rect x="2880" y="192" width="97" height="97" fill="#e45e63"/><rect x="2976" y="192" width="97" height="97" fill="#e45e63"/><rect x="3072" y="192" width="97" height="97" fill="#e45e63"/><rect x="-288" y="288" width="97" height="97" fill="#ea6a5c"/><rect x="-192" y="288" width="97" height="97" fill="#ea6a5c"/><rect x="-96" y="288" width="97" height="97" fill="#ea6a5c"/><rect x="0" y="288" width="97" height="97" fill="#ea6a5c"/><rect x="96" y="288" width="97" height="97" fill="#ea6b5c"/><rect x="192" y="288" width="97" height="97" fill="#e86860"/><rect x="288" y="288" width="97" height="97" fill="#e66567"/><rect x="384" y="288" width="97" height="97" fill="#e6646b"/><rect x="480" y="288" width="97" height="97" fill="#e6646b"/><rect x="576" y="288" width="97" height="97" fill="#e7656a"/><rect x="672" y="288" width="97" height="97" fill="#e76669"/><rect x="768" y="288" width="97" height="97" fill="#e66167"/><rect x="864" y="288" width="97" height="97" fill="#e55e66"/><rect x="960" y="288" width="97" height="97" fill="#e45c66"/><rect x="1056" y="288" width="97" height="97" fill="#e45a66"/><rect x="1152" y="288" width="97" height="97" fill="#e45a66"/><rect x="1248" y="288" width="97" height="97" fill="#e45a67"/><rect x="1344" y="288" width="97" height="97" fill="#e45a68"/><rect x="1440" y="288" width="97" height="97" fill="#e55b68"/><rect x="1536" y="288" width="97" height="97" fill="#e55c66"/><rect x="1632" y="288" width="97" height="97" fill="#e55e63"/><rect x="1728" y="288" width="97" height="97" fill="#e55f61"/><rect x="1824" y="288" width="97" height="97" fill="#e56160"/><rect x="1920" y="288" width="97" height="97" fill="#e5625e"/><rect x="2016" y="288" width="97" height="97" fill="#e5645c"/><rect x="2112" y="288" width="97" height="97" fill="#e5655b"/><rect x="2208" y="288" width="97" height="97" fill="#e5665a"/><rect x="2304" y="288" width="97" height="97" fill="#e66759"/><rect x="2400" y="288" width="97" height="97" fill="#e66758"/><rect x="2496" y="288" width="97" height="97" fill="#e66758"/><rect x="2592" y="288" width="97" height="97" fill="#e66659"/><rect x="2688" y="288" width="97" height="97" fill="#e6655b"/><rect x="2784" y="288" width="97" height="97" fill="#e5645e"/><rect x="2880" y="288" width="97" height="97" fill="#e5645f"/><rect x="2976" y="288" width="97" height="97" fill="#e5645f"/><rect x="3072" y="288" width="97" height="97" fill="#e5645f"/><rect x="-288" y="384" width="97" height="97" fill="#ea6a5c"/><rect x="-192" y="384" width="97" height="97" fill="#ea6a5c"/><rect x="-96" y="384" width="97" height="97" fill="#ea6a5c"/><rect x="0" y="384" width="97" height="97" fill="#ea6a5c"/><rect x="96" y="384" width="97" height="97" fill="#ea6a5c"/><rect x="192" y="384" width="97" height="97" fill="#ea6a5e"/><rect x="288" y="384" width="97" height="97" fill="#e96a62"/><rect x="384" y="384" width="97" height="97" fill="#e96967"/><rect x="480" y="384" width="97" height="97" fill="#e96a67"/><rect x="576" y="384" width="97" height="97" fill="#e96a67"/><rect x="672" y="384" width="97" height="97" fill="#e86966"/><rect x="768" y="384" width="97" height="97" fill="#e76665"/><rect x="864" y="384" width="97" height="97" fill="#e76364"/><rect x="960" y="384" width="97" height="97" fill="#e66164"/><rect x="1056" y="384" width="97" height="97" fill="#e65f64"/><rect x="1152" y="384" width="97" height="97" fill="#e65f64"/><rect x="1248" y="384" width="97" height="97" fill="#e65e65"/><rect x="1344" y="384" width="97" height="97" fill="#e65f65"/><rect x="1440" y="384" width="97" height="97" fill="#e65f64"/><rect x="1536" y="384" width="97" height="97" fill="#e66062"/><rect x="1632" y="384" width="97" height="97" fill="#e66260"/><rect x="1728" y="384" width="97" height="97" fill="#e6645d"/><rect x="1824" y="384" width="97" height="97" fill="#e6655b"/><rect x="1920" y="384" width="97" height="97" fill="#e66759"/><rect x="2016" y="384" width="97" height="97" fill="#e66957"/><rect x="2112" y="384" width="97" height="97" fill="#e66a56"/><rect x="2208" y="384" width="97" height="97" fill="#e66b56"/><rect x="2304" y="384" width="97" height="97" fill="#e76c55"/><rect x="2400" y="384" width="97" height="97" fill="#e76c54"/><rect x="2496" y="384" width="97" height="97" fill="#e76c53"/><rect x="2592" y="384" width="97" height="97" fill="#e76c54"/><rect x="2688" y="384" width="97" height="97" fill="#e76b57"/><rect x="2784" y="384" width="97" height="97" fill="#e76a5a"/><rect x="2880" y="384" width="97" height="97" fill="#e7695c"/><rect x="2976" y="384" width="97" height="97" fill="#e7695c"/><rect x="3072" y="384" width="97" height="97" fill="#e7695c"/><rect x="-288" y="480" width="97" height="97" fill="#ea6a5c"/><rect x="-192" y="480" width="97" height="97" fill="#ea6a5c"/><rect x="-96" y="480" width="97" height="97" fill="#ea6a5c"/><rect x="0" y="480" width="97" height="97" fill="#ea6a5c"/><rect x="96" y="480" width="97" height="97" fill="#ea6a5c"/><rect x="192" y="480" width="97" height="97" fill="#ea6a5c"/><rect x="288" y="480" width="97" height="97" fill="#ea6b5e"/><rect x="384" y="480" width="97" height="97" fill="#ea6c61"/><rect x="480" y="480" width="97" height="97" fill="#ea6d62"/><rect x="576" y="480" width="97" height="97" fill="#ea6c62"/><rect x="672" y="480" width="97" height="97" fill="#e96b62"/><rect x="768" y="480" width="97" height="97" fill="#e96962"/><rect x="864" y="480" width="97" height="97" fill="#e86662"/><rect x="960" y="480" width="97" height="97" fill="#e76562"/><rect x="1056" y="480" width="97" height="97" fill="#e76362"/><rect x="1152" y="480" width="97" height="97" fill="#e76362"/><rect x="1248" y="480" width="97" height="97" fill="#e76362"/><rect x="1344" y="480" width="97" height="97" fill="#e76362"/><rect x="1440" y="480" width="97" height="97" fill="#e76460"/><rect x="1536" y="480" width="97" height="97" fill="#e7645e"/><rect x="1632" y="480" width="97" height="97" fill="#e7655c"/><rect x="1728" y="480" width="97" height="97" fill="#e76759"/><rect x="1824" y="480" width="97" height="97" fill="#e76956"/><rect x="1920" y="480" width="97" height="97" fill="#e76c54"/><rect x="2016" y="480" width="97" height="97" fill="#e76e52"/><rect x="2112" y="480" width="97" height="97" fill="#e76f53"/><rect x="2208" y="480" width="97" height="97" fill="#e76f52"/><rect x="2304" y="480" width="97" height="97" fill="#e77052"/><rect x="2400" y="480" width="97" height="97" fill="#e87151"/><rect x="2496" y="480" width="97" height="97" fill="#e87150"/><rect x="2592" y="480" width="97" height="97" fill="#e87151"/><rect x="2688" y="480" width="97" height="97" fill="#e87054"/><rect x="2784" y="480" width="97" height="97" fill="#e86f58"/><rect x="2880" y="480" width="97" height="97" fill="#e86f59"/><rect x="2976" y="480" width="97" height="97" fill="#e86f59"/><rect x="3072" y="480" width="97" height="97" fill="#e86f59"/><rect x="-288" y="576" width="97" height="97" fill="#ea6a5c"/><rect x="-192" y="576" width="97" height="97" fill="#ea6a5c"/><rect x="-96" y="576" width="97" height="97" fill="#ea6a5c"/><rect x="0" y="576" width="97" height="97" fill="#ea6a5b"/><rect x="96" y="576" width="97" height="97" fill="#ea6a5c"/><rect x="192" y="576" width="97" height="97" fill="#ea6a5c"/><rect x="288" y="576" width="97" height="97" fill="#ea6a5c"/><rect x="384" y="576" width="97" height="97" fill="#ea6b5d"/><rect x="480" y="576" width="97" height="97" fill="#eb6c5e"/><rect x="576" y="576" width="97" height="97" fill="#ea6c5f"/><rect x="672" y="576" width="97" height="97" fill="#ea6c5f"/><rect x="768" y="576" width="97" height="97" fill="#e96a5f"/><rect x="864" y="576" width="97" height="97" fill="#e96860"/><rect x="960" y="576" width="97" height="97" fill="#e96760"/><rect x="1056" y="576" width="97" height="97" fill="#e86660"/><rect x="1152" y="576" width="97" height="97" fill="#e86660"/><rect x="1248" y="576" width="97" height="97" fill="#e86660"/><rect x="1344" y="576" width="97" height="97" fill="#e8675f"/><rect x="1440" y="576" width="97" height="97" fill="#e8675d"/><rect x="1536" y="576" width="97" height="97" fill="#e8675b"/><rect x="1632" y="576" width="97" height="97" fill="#e86859"/><rect x="1728" y="576" width="97" height="97" fill="#e86956"/><rect x="1824" y="576" width="97" height="97" fill="#e86c53"/><rect x="1920" y="576" width="97" height="97" fill="#e86f50"/><rect x="2016" y="576" width="97" height="97" fill="#e8714f"/><rect x="2112" y="576" width="97" height="97" fill="#e87250"/><rect x="2208" y="576" width="97" height="97" fill="#e87350"/><rect x="2304" y="576" width="97" height="97" fill="#e87450"/><rect x="2400" y="576" width="97" height="97" fill="#e87550"/><rect x="2496" y="576" width="97" height="97" fill="#e97650"/><rect x="2592" y="576" width="97" height="97" fill="#e97651"/><rect x="2688" y="576" width="97" height="97" fill="#e97554"/><rect x="2784" y="576" width="97" height="97" fill="#e97457"/><rect x="2880" y="576" width="97" height="97" fill="#e97458"/><rect x="2976" y="576" width="97" height="97" fill="#e97458"/><rect x="3072" y="576" width="97" height="97" fill="#e97458"/><rect x="-288" y="672" width="97" height="97" fill="#ea6a5b"/><rect x="-192" y="672" width="97" height="97" fill="#ea6a5b"/><rect x="-96" y="672" width="97" height="97" fill="#ea6a5b"/><rect x="0" y="672" width="97" height="97" fill="#ea6a5b"/><rect x="96" y="672" width="97" height="97" fill="#ea6a5b"/><rect x="192" y="672" width="97" height="97" fill="#ea6a5c"/><rect x="288" y="672" width="97" height="97" fill="#ea6a5c"/><rect x="384" y="672" width="97" height="97" fill="#ea6a5c"/><rect x="480" y="672" width="97" height="97" fill="#ea6a5c"/><rect x="576" y="672" width="97" height="97" fill="#ea6a5c"/><rect x="672" y="672" width="97" height="97" fill="#ea6b5d"/><rect x="768" y="672" width="97" height="97" fill="#ea6a5d"/><rect x="864" y="672" width="97" height="97" fill="#ea6a5d"/><rect x="960" y="672" width="97" height="97" fill="#e9695e"/><rect x="1056" y="672" width="97" height="97" fill="#e9685e"/><rect x="1152" y="672" width="97" height="97" fill="#e9685e"/><rect x="1248" y="672" width="97" height="97" fill="#e9695e"/><rect x="1344" y="672" width="97" height="97" fill="#e96a5d"/><rect x="1440" y="672" width="97" height="97" fill="#e9695b"/><rect x="1536" y="672" width="97" height="97" fill="#e86959"/><rect x="1632" y="672" width="97" height="97" fill="#e86956"/><rect x="1728" y="672" width="97" height="97" fill="#e86a54"/><rect x="1824" y="672" width="97" height="97" fill="#e86c51"/><rect x="1920" y="672" width="97" height="97" fill="#e86f4f"/><rect x="2016" y="672" width="97" height="97" fill="#e8724f"/><rect x="2112" y="672" width="97" height="97" fill="#e8744f"/><rect x="2208" y="672" width="97" height="97" fill="#e8754f"/><rect x="2304" y="672" width="97" height="97" fill="#e87750"/><rect x="2400" y="672" width="97" height="97" fill="#e97850"/><rect x="2496" y="672" width="97" height="97" fill="#e97a51"/><rect x="2592" y="672" width="97" height="97" fill="#e97a52"/><rect x="2688" y="672" width="97" height="97" fill="#e97a54"/><rect x="2784" y="672" width="97" height="97" fill="#ea7956"/><rect x="2880" y="672" width="97" height="97" fill="#ea7857"/><rect x="2976" y="672" width="97" height="97" fill="#ea7857"/><rect x="3072" y="672" width="97" height="97" fill="#ea7857"/><rect x="-288" y="768" width="97" height="97" fill="#ea6a5b"/><rect x="-192" y="768" width="97" height="97" fill="#ea6a5b"/><rect x="-96" y="768" width="97" height="97" fill="#ea6a5b"/><rect x="0" y="768" width="97" height="97" fill="#ea6a5b"/><rect x="96" y="768" width="97" height="97" fill="#ea6a5b"/><rect x="192" y="768" width="97" height="97" fill="#ea6a5b"/><rect x="288" y="768" width="97" height="97" fill="#ea6a5c"/><rect x="384" y="768" width="97" height="97" fill="#ea6a5c"/><rect x="480" y="768" width="97" height="97" fill="#ea6a5c"/><rect x="576" y="768" width="97" height="97" fill="#ea6a5c"/><rect x="672" y="768" width="97" height="97" fill="#ea6a5c"/><rect x="768" y="768" width="97" height="97" fill="#ea6a5c"/><rect x="864" y="768" width="97" height="97" fill="#ea6a5c"/><rect x="960" y="768" width="97" height="97" fill="#ea6a5c"/><rect x="1056" y="768" width="97" height="97" fill="#ea6a5d"/><rect x="1152" y="768" width="97" height="97" fill="#ea6a5d"/><rect x="1248" y="768" width="97" height="97" fill="#ea6a5d"/><rect x="1344" y="768" width="97" height="97" fill="#e96a5b"/><rect x="1440" y="768" width="97" height="97" fill="#e96959"/><rect x="1536" y="768" width="97" height="97" fill="#e96857"/><rect x="1632" y="768" width="97" height="97" fill="#e86854"/><rect x="1728" y="768" width="97" height="97" fill="#e86952"/><rect x="1824" y="768" width="97" height="97" fill="#e86b50"/><rect x="1920" y="768" width="97" height="97" fill="#e86e4f"/><rect x="2016" y="768" width="97" height="97" fill="#e8714f"/><rect x="2112" y="768" width="97" height="97" fill="#e8744f"/><rect x="2208" y="768" width="97" height="97" fill="#e8764f"/><rect x="2304" y="768" width="97" height="97" fill="#e97850"/><rect x="2400" y="768" width="97" height="97" fill="#e97b51"/><rect x="2496" y="768" width="97" height="97" fill="#e97d52"/><rect x="2592" y="768" width="97" height="97" fill="#ea7e54"/><rect x="2688" y="768" width="97" height="97" fill="#ea7e55"/><rect x="2784" y="768" width="97" height="97" fill="#ea7d57"/><rect x="2880" y="768" width="97" height="97" fill="#ea7c57"/><rect x="2976" y="768" width="97" height="97" fill="#ea7c57"/><rect x="3072" y="768" width="97" height="97" fill="#ea7c57"/><rect x="-288" y="864" width="97" height="97" fill="#ea6a5a"/><rect x="-192" y="864" width="97" height="97" fill="#ea6a5a"/><rect x="-96" y="864" width="97" height="97" fill="#ea6a5a"/><rect x="0" y="864" width="97" height="97" fill="#ea6a5a"/><rect x="96" y="864" width="97" height="97" fill="#ea6a5b"/><rect x="192" y="864" width="97" height="97" fill="#ea6a5b"/><rect x="288" y="864" width="97" height="97" fill="#ea6a5b"/><rect x="384" y="864" width="97" height="97" fill="#ea6a5b"/><rect x="480" y="864" width="97" height="97" fill="#ea6a5c"/><rect x="576" y="864" width="97" height="97" fill="#ea6a5c"/><rect x="672" y="864" width="97" height="97" fill="#ea6a5c"/><rect x="768" y="864" width="97" height="97" fill="#ea6a5c"/><rect x="864" y="864" width="97" height="97" fill="#ea6a5c"/><rect x="960" y="864" width="97" height="97" fill="#ea6a5c"/><rect x="1056" y="864" width="97" height="97" fill="#ea6a5c"/><rect x="1152" y="864" width="97" height="97" fill="#ea6a5c"/><rect x="1248" y="864" width="97" height="97" fill="#ea6a5c"/><rect x="1344" y="864" width="97" height="97" fill="#ea6a5b"/><rect x="1440" y="864" width="97" height="97" fill="#e96858"/><rect x="1536" y="864" width="97" height="97" fill="#e96655"/><rect x="1632" y="864" width="97" height="97" fill="#e86652"/><rect x="1728" y="864" width="97" height="97" fill="#e86751"/><rect x="1824" y="864" width="97" height="97" fill="#e8694f"/><rect x="1920" y="864" width="97" height="97" fill="#e86b4f"/><rect x="2016" y="864" width="97" height="97" fill="#e86f4f"/><rect x="2112" y="864" width="97" height="97" fill="#e8724f"/><rect x="2208" y="864" width="97" height="97" fill="#e8754f"/><rect x="2304" y="864" width="97" height="97" fill="#e97850"/><rect x="2400" y="864" width="97" height="97" fill="#e97b52"/><rect x="2496" y="864" width="97" height="97" fill="#ea7e54"/><rect x="2592" y="864" width="97" height="97" fill="#ea8055"/><rect x="2688" y="864" width="97" height="97" fill="#eb8156"/><rect x="2784" y="864" width="97" height="97" fill="#eb8057"/><rect x="2880" y="864" width="97" height="97" fill="#eb7f58"/><rect x="2976" y="864" width="97" height="97" fill="#eb7f58"/><rect x="3072" y="864" width="97" height="97" fill="#eb7f58"/><rect x="-288" y="960" width="97" height="97" fill="#ea6a5a"/><rect x="-192" y="960" width="97" height="97" fill="#ea6a5a"/><rect x="-96" y="960" width="97" height="97" fill="#ea6a5a"/><rect x="0" y="960" width="97" height="97" fill="#ea6a5a"/><rect x="96" y="960" width="97" height="97" fill="#ea6a5a"/><rect x="192" y="960" width="97" height="97" fill="#ea6a5a"/><rect x="288" y="960" width="97" height="97" fill="#ea6a5b"/><rect x="384" y="960" width="97" height="97" fill="#ea6a5b"/><rect x="480" y="960" width="97" height="97" fill="#ea6a5b"/><rect x="576" y="960" width="97" height="97" fill="#ea6a5b"/><rect x="672" y="960" width="97" height="97" fill="#ea6a5b"/><rect x="768" y="960" width="97" height="97" fill="#ea6a5b"/><rect x="864" y="960" width="97" height="97" fill="#ea6a5b"/><rect x="960" y="960" width="97" height="97" fill="#ea6a5c"/><rect x="1056" y="960" width="97" height="97" fill="#ea6a5c"/><rect x="1152" y="960" width="97" height="97" fill="#ea6a5c"/><rect x="1248" y="960" width="97" height="97" fill="#ea6b5c"/><rect x="1344" y="960" width="97" height="97" fill="#ea6a5c"/><rect x="1440" y="960" width="97" height="97" fill="#e96657"/><rect x="1536" y="960" width="97" height="97" fill="#e96353"/><rect x="1632" y="960" width="97" height="97" fill="#e86250"/><rect x="1728" y="960" width="97" height="97" fill="#e8634f"/><rect x="1824" y="960" width="97" height="97" fill="#e8654f"/><rect x="1920" y="960" width="97" height="97" fill="#e8674e"/><rect x="2016" y="960" width="97" height="97" fill="#e86a4e"/><rect x="2112" y="960" width="97" height="97" fill="#e86c4f"/><rect x="2208" y="960" width="97" height="97" fill="#e8704f"/><rect x="2304" y="960" width="97" height="97" fill="#e97551"/><rect x="2400" y="960" width="97" height="97" fill="#e97953"/><rect x="2496" y="960" width="97" height="97" fill="#ea7e54"/><rect x="2592" y="960" width="97" height="97" fill="#ea8056"/><rect x="2688" y="960" width="97" height="97" fill="#eb8257"/><rect x="2784" y="960" width="97" height="97" fill="#ec8258"/><rect x="2880" y="960" width="97" height="97" fill="#ec8158"/><rect x="2976" y="960" width="97" height="97" fill="#ec8158"/><rect x="3072" y="960" width="97" height="97" fill="#ec8158"/><rect x="-288" y="1056" width="97" height="97" fill="#ea6a5a"/><rect x="-192" y="1056" width="97" height="97" fill="#ea6a5a"/><rect x="-96" y="1056" width="97" height="97" fill="#ea6a5a"/><rect x="0" y="1056" width="97" height="97" fill="#ea6a5a"/><rect x="96" y="1056" width="97" height="97" fill="#ea6a5a"/><rect x="192" y="1056" width="97" height="97" fill="#ea6a5a"/><rect x="288" y="1056" width="97" height="97" fill="#ea6a5a"/><rect x="384" y="1056" width="97" height="97" fill="#ea6a5a"/><rect x="480" y="1056" width="97" height="97" fill="#ea6a5a"/><rect x="576" y="1056" width="97" height="97" fill="#ea6a5a"/><rect x="672" y="1056" width="97" height="97" fill="#ea6a5b"/><rect x="768" y="1056" width="97" height="97" fill="#ea6a5b"/><rect x="864" y="1056" width="97" height="97" fill="#ea6a5b"/><rect x="960" y="1056" width="97" height="97" fill="#ea6a5b"/><rect x="1056" y="1056" width="97" height="97" fill="#ea6a5b"/><rect x="1152" y="1056" width="97" height="97" fill="#ea6a5c"/><rect x="1248" y="1056" width="97" height="97" fill="#ea6a5c"/><rect x="1344" y="1056" width="97" height="97" fill="#ea6a5c"/><rect x="1440" y="1056" width="97" height="97" fill="#e96456"/><rect x="1536" y="1056" width="97" height="97" fill="#e85d4f"/><rect x="1632" y="1056" width="97" height="97" fill="#e85e4e"/><rect x="1728" y="1056" width="97" height="97" fill="#e85f4e"/><rect x="1824" y="1056" width="97" height="97" fill="#e8604e"/><rect x="1920" y="1056" width="97" height="97" fill="#e8624e"/><rect x="2016" y="1056" width="97" height="97" fill="#e8644e"/><rect x="2112" y="1056" width="97" height="97" fill="#e8654f"/><rect x="2208" y="1056" width="97" height="97" fill="#e8694f"/><rect x="2304" y="1056" width="97" height="97" fill="#e86e50"/><rect x="2400" y="1056" width="97" height="97" fill="#e97252"/><rect x="2496" y="1056" width="97" height="97" fill="#ea7854"/><rect x="2592" y="1056" width="97" height="97" fill="#eb7a55"/><rect x="2688" y="1056" width="97" height="97" fill="#eb7d56"/><rect x="2784" y="1056" width="97" height="97" fill="#ec8158"/><rect x="2880" y="1056" width="97" height="97" fill="#ed7f57"/><rect x="2976" y="1056" width="97" height="97" fill="#ed7f57"/><rect x="3072" y="1056" width="97" height="97" fill="#ed7f57"/><rect x="-288" y="1152" width="97" height="97" fill="#ea6a59"/><rect x="-192" y="1152" width="97" height="97" fill="#ea6a59"/><rect x="-96" y="1152" width="97" height="97" fill="#ea6a59"/><rect x="0" y="1152" width="97" height="97" fill="#ea6a59"/><rect x="96" y="1152" width="97" height="97" fill="#ea6a59"/><rect x="192" y="1152" width="97" height="97" fill="#eb6a59"/><rect x="288" y="1152" width="97" height="97" fill="#eb6a59"/><rect x="384" y="1152" width="97" height="97" fill="#eb6a5a"/><rect x="480" y="1152" width="97" height="97" fill="#eb6a5a"/><rect x="576" y="1152" width="97" height="97" fill="#eb6a5a"/><rect x="672" y="1152" width="97" height="97" fill="#ea6a5a"/><rect x="768" y="1152" width="97" height="97" fill="#ea6a5a"/><rect x="864" y="1152" width="97" height="97" fill="#ea6a5a"/><rect x="960" y="1152" width="97" height="97" fill="#ea6a5a"/><rect x="1056" y="1152" width="97" height="97" fill="#ea695a"/><rect x="1152" y="1152" width="97" height="97" fill="#ea695a"/><rect x="1248" y="1152" width="97" height="97" fill="#ea695a"/><rect x="1344" y="1152" width="97" height="97" fill="#ea6759"/><rect x="1440" y="1152" width="97" height="97" fill="#e96254"/><rect x="1536" y="1152" width="97" height="97" fill="#e85c4e"/><rect x="1632" y="1152" width="97" height="97" fill="#e85c4e"/><rect x="1728" y="1152" width="97" height="97" fill="#e85c4e"/><rect x="1824" y="1152" width="97" height="97" fill="#e85d4e"/><rect x="1920" y="1152" width="97" height="97" fill="#e85e4e"/><rect x="2016" y="1152" width="97" height="97" fill="#e85f4e"/><rect x="2112" y="1152" width="97" height="97" fill="#e85f4e"/><rect x="2208" y="1152" width="97" height="97" fill="#e8614e"/><rect x="2304" y="1152" width="97" height="97" fill="#e9674f"/><rect x="2400" y="1152" width="97" height="97" fill="#ea6650"/><rect x="2496" y="1152" width="97" height="97" fill="#ea6750"/><rect x="2592" y="1152" width="97" height="97" fill="#ea6a51"/><rect x="2688" y="1152" width="97" height="97" fill="#eb6e52"/><rect x="2784" y="1152" width="97" height="97" fill="#ed7053"/><rect x="2880" y="1152" width="97" height="97" fill="#ed7052"/><rect x="2976" y="1152" width="97" height="97" fill="#ed7052"/><rect x="3072" y="1152" width="97" height="97" fill="#ed7052"/><rect x="-288" y="1248" width="97" height="97" fill="#ea6a59"/><rect x="-192" y="1248" width="97" height="97" fill="#ea6a59"/><rect x="-96" y="1248" width="97" height="97" fill="#ea6a59"/><rect x="0" y="1248" width="97" height="97" fill="#ea6a59"/><rect x="96" y="1248" width="97" height="97" fill="#eb6a59"/><rect x="192" y="1248" width="97" height="97" fill="#eb6a59"/><rect x="288" y="1248" width="97" height="97" fill="#eb6a59"/><rect x="384" y="1248" width="97" height="97" fill="#eb6a59"/><rect x="480" y="1248" width="97" height="97" fill="#eb6a59"/><rect x="576" y="1248" width="97" height="97" fill="#eb6a59"/><rect x="672" y="1248" width="97" height="97" fill="#eb6a59"/><rect x="768" y="1248" width="97" height="97" fill="#eb6a59"/><rect x="864" y="1248" width="97" height="97" fill="#ea6959"/><rect x="960" y="1248" width="97" height="97" fill="#ea6959"/><rect x="1056" y="1248" width="97" height="97" fill="#ea6959"/><rect x="1152" y="1248" width="97" height="97" fill="#ea6859"/><rect x="1248" y="1248" width="97" height="97" fill="#ea6758"/><rect x="1344" y="1248" width="97" height="97" fill="#e96556"/><rect x="1440" y="1248" width="97" height="97" fill="#e96153"/><rect x="1536" y="1248" width="97" height="97" fill="#e85d4f"/><rect x="1632" y="1248" width="97" height="97" fill="#e85c4e"/><rect x="1728" y="1248" width="97" height="97" fill="#e85c4e"/><rect x="1824" y="1248" width="97" height="97" fill="#e85c4e"/><rect x="1920" y="1248" width="97" height="97" fill="#e85c4e"/><rect x="2016" y="1248" width="97" height="97" fill="#e85c4e"/><rect x="2112" y="1248" width="97" height="97" fill="#e85b4e"/><rect x="2208" y="1248" width="97" height="97" fill="#e8574e"/><rect x="2304" y="1248" width="97" height="97" fill="#e85d4e"/><rect x="2400" y="1248" width="97" height="97" fill="#e85d4e"/><rect x="2496" y="1248" width="97" height="97" fill="#e9564e"/><rect x="2592" y="1248" width="97" height="97" fill="#e95c4e"/><rect x="2688" y="1248" width="97" height="97" fill="#e95e4f"/><rect x="2784" y="1248" width="97" height="97" fill="#ea5b4e"/><rect x="2880" y="1248" width="97" height="97" fill="#ec5b4e"/><rect x="2976" y="1248" width="97" height="97" fill="#ec5b4e"/><rect x="3072" y="1248" width="97" height="97" fill="#ec5b4e"/><rect x="-288" y="1344" width="97" height="97" fill="#ea6a58"/><rect x="-192" y="1344" width="97" height="97" fill="#ea6a58"/><rect x="-96" y="1344" width="97" height="97" fill="#ea6a58"/><rect x="0" y="1344" width="97" height="97" fill="#ea6a58"/><rect x="96" y="1344" width="97" height="97" fill="#eb6a58"/><rect x="192" y="1344" width="97" height="97" fill="#eb6a58"/><rect x="288" y="1344" width="97" height="97" fill="#eb6a58"/><rect x="384" y="1344" width="97" height="97" fill="#eb6a58"/><rect x="480" y="1344" width="97" height="97" fill="#eb6a58"/><rect x="576" y="1344" width="97" height="97" fill="#eb6a58"/><rect x="672" y="1344" width="97" height="97" fill="#eb6958"/><rect x="768" y="1344" width="97" height="97" fill="#eb6958"/><rect x="864" y="1344" width="97" height="97" fill="#ea6958"/><rect x="960" y="1344" width="97" height="97" fill="#ea6858"/><rect x="1056" y="1344" width="97" height="97" fill="#ea6858"/><rect x="1152" y="1344" width="97" height="97" fill="#ea6757"/><rect x="1248" y="1344" width="97" height="97" fill="#ea6556"/><rect x="1344" y="1344" width="97" height="97" fill="#e96354"/><rect x="1440" y="1344" width="97" height="97" fill="#e96152"/><rect x="1536" y="1344" width="97" height="97" fill="#e95e50"/><rect x="1632" y="1344" width="97" height="97" fill="#e85d4f"/><rect x="1728" y="1344" width="97" height="97" fill="#e85c4e"/><rect x="1824" y="1344" width="97" height="97" fill="#e85c4e"/><rect x="1920" y="1344" width="97" height="97" fill="#e85c4e"/><rect x="2016" y="1344" width="97" height="97" fill="#e85c4e"/><rect x="2112" y="1344" width="97" height="97" fill="#e85c4e"/><rect x="2208" y="1344" width="97" height="97" fill="#e85b4e"/><rect x="2304" y="1344" width="97" height="97" fill="#e85c4e"/><rect x="2400" y="1344" width="97" height="97" fill="#e85b4e"/><rect x="2496" y="1344" width="97" height="97" fill="#e8594e"/><rect x="2592" y="1344" width="97" height="97" fill="#e85b4e"/><rect x="2688" y="1344" width="97" height="97" fill="#e85c4e"/><rect x="2784" y="1344" width="97" height="97" fill="#e85a4e"/><rect x="2880" y="1344" width="97" height="97" fill="#e85b4e"/><rect x="2976" y="1344" width="97" height="97" fill="#e85b4e"/><rect x="3072" y="1344" width="97" height="97" fill="#e85b4e"/><rect x="-288" y="1440" width="97" height="97" fill="#ea6958"/><rect x="-192" y="1440" width="97" height="97" fill="#ea6958"/><rect x="-96" y="1440" width="97" height="97" fill="#ea6958"/><rect x="0" y="1440" width="97" height="97" fill="#ea6958"/><rect x="96" y="1440" width="97" height="97" fill="#eb6a58"/><rect x="192" y="1440" width="97" height="97" fill="#eb6a58"/><rect x="288" y="1440" width="97" height="97" fill="#eb6a58"/><rect x="384" y="1440" width="97" height="97" fill="#eb6a58"/><rect x="480" y="1440" width="97" height="97" fill="#eb6958"/><rect x="576" y="1440" width="97" height="97" fill="#eb6957"/><rect x="672" y="1440" width="97" height="97" fill="#eb6957"/><rect x="768" y="1440" width="97" height="97" fill="#eb6957"/><rect x="864" y="1440" width="97" height="97" fill="#eb6857"/><rect x="960" y="1440" width="97" height="97" fill="#ea6857"/><rect x="1056" y="1440" width="97" height="97" fill="#ea6756"/><rect x="1152" y="1440" width="97" height="97" fill="#ea6656"/><rect x="1248" y="1440" width="97" height="97" fill="#ea6455"/><rect x="1344" y="1440" width="97" height="97" fill="#e96353"/><rect x="1440" y="1440" width="97" height="97" fill="#e96152"/><rect x="1536" y="1440" width="97" height="97" fill="#e95f50"/><rect x="1632" y="1440" width="97" height="97" fill="#e95e4f"/><rect x="1728" y="1440" width="97" height="97" fill="#e85d4e"/><rect x="1824" y="1440" width="97" height="97" fill="#e85d4e"/><rect x="1920" y="1440" width="97" height="97" fill="#e85d4e"/><rect x="2016" y="1440" width="97" height="97" fill="#e85d4e"/><rect x="2112" y="1440" width="97" height="97" fill="#e85e4e"/><rect x="2208" y="1440" width="97" height="97" fill="#e85e4e"/><rect x="2304" y="1440" width="97" height="97" fill="#e85d4e"/><rect x="2400" y="1440" width="97" height="97" fill="#e85d4e"/><rect x="2496" y="1440" width="97" height="97" fill="#e85d4e"/><rect x="2592" y="1440" width="97" height="97" fill="#e85d4e"/><rect x="2688" y="1440" width="97" height="97" fill="#e85c4e"/><rect x="2784" y="1440" width="97" height="97" fill="#e85d4e"/><rect x="2880" y="1440" width="97" height="97" fill="#e85d4e"/><rect x="2976" y="1440" width="97" height="97" fill="#e85d4e"/><rect x="3072" y="1440" width="97" height="97" fill="#e85d4e"/><rect x="-288" y="1536" width="97" height="97" fill="#ea6957"/><rect x="-192" y="1536" width="97" height="97" fill="#ea6957"/><rect x="-96" y="1536" width="97" height="97" fill="#ea6957"/><rect x="0" y="1536" width="97" height="97" fill="#eb6957"/><rect x="96" y="1536" width="97" height="97" fill="#eb6957"/><rect x="192" y="1536" width="97" height="97" fill="#eb6957"/><rect x="288" y="1536" width="97" height="97" fill="#eb6957"/><rect x="384" y="1536" width="97" height="97" fill="#eb6957"/><rect x="480" y="1536" width="97" height="97" fill="#eb6957"/><rect x="576" y="1536" width="97" height="97" fill="#eb6957"/><rect x="672" y="1536" width="97" height="97" fill="#eb6957"/><rect x="768" y="1536" width="97" height="97" fill="#eb6856"/><rect x="864" y="1536" width="97" height="97" fill="#eb6856"/><rect x="960" y="1536" width="97" height="97" fill="#ea6756"/><rect x="1056" y="1536" width="97" height="97" fill="#ea6655"/><rect x="1152" y="1536" width="97" height="97" fill="#ea6555"/><rect x="1248" y="1536" width="97" height="97" fill="#ea6454"/><rect x="1344" y="1536" width="97" height="97" fill="#ea6252"/><rect x="1440" y="1536" width="97" height="97" fill="#e96151"/><rect x="1536" y="1536" width="97" height="97" fill="#e95f50"/><rect x="1632" y="1536" width="97" height="97" fill="#e95e4f"/><rect x="1728" y="1536" width="97" height="97" fill="#e95e4e"/><rect x="1824" y="1536" width="97" height="97" fill="#e85d4e"/><rect x="1920" y="1536" width="97" height="97" fill="#e85d4e"/><rect x="2016" y="1536" width="97" height="97" fill="#e85d4e"/><rect x="2112" y="1536" width="97" height="97" fill="#e85e4e"/><rect x="2208" y="1536" width="97" height="97" fill="#e85e4e"/><rect x="2304" y="1536" width="97" height="97" fill="#e85e4d"/><rect x="2400" y="1536" width="97" height="97" fill="#e85d4d"/><rect x="2496" y="1536" width="97" height="97" fill="#e85d4d"/><rect x="2592" y="1536" width="97" height="97" fill="#e85d4d"/><rect x="2688" y="1536" width="97" height="97" fill="#e85d4e"/><rect x="2784" y="1536" width="97" height="97" fill="#e85d4e"/><rect x="2880" y="1536" width="97" height="97" fill="#e85d4e"/><rect x="2976" y="1536" width="97" height="97" fill="#e85d4e"/><rect x="3072" y="1536" width="97" height="97" fill="#e85d4e"/><rect x="-288" y="1632" width="97" height="97" fill="#ea6957"/><rect x="-192" y="1632" width="97" height="97" fill="#ea6957"/><rect x="-96" y="1632" width="97" height="97" fill="#ea6957"/><rect x="0" y="1632" width="97" height="97" fill="#eb6957"/><rect x="96" y="1632" width="97" height="97" fill="#eb6957"/><rect x="192" y="1632" width="97" height="97" fill="#eb6957"/><rect x="288" y="1632" width="97" height="97" fill="#eb6956"/><rect x="384" y="1632" width="97" height="97" fill="#eb6956"/><rect x="480" y="1632" width="97" height="97" fill="#eb6956"/><rect x="576" y="1632" width="97" height="97" fill="#eb6856"/><rect x="672" y="1632" width="97" height="97" fill="#eb6856"/><rect x="768" y="1632" width="97" height="97" fill="#eb6856"/><rect x="864" y="1632" width="97" height="97" fill="#eb6755"/><rect x="960" y="1632" width="97" height="97" fill="#ea6655"/><rect x="1056" y="1632" width="97" height="97" fill="#ea6654"/><rect x="1152" y="1632" width="97" height="97" fill="#ea6554"/><rect x="1248" y="1632" width="97" height="97" fill="#ea6353"/><rect x="1344" y="1632" width="97" height="97" fill="#ea6252"/><rect x="1440" y="1632" width="97" height="97" fill="#e96151"/><rect x="1536" y="1632" width="97" height="97" fill="#e96050"/><rect x="1632" y="1632" width="97" height="97" fill="#e95f4f"/><rect x="1728" y="1632" width="97" height="97" fill="#e95e4e"/><rect x="1824" y="1632" width="97" height="97" fill="#e95e4e"/><rect x="1920" y="1632" width="97" height="97" fill="#e85e4e"/><rect x="2016" y="1632" width="97" height="97" fill="#e85e4e"/><rect x="2112" y="1632" width="97" height="97" fill="#e85e4d"/><rect x="2208" y="1632" width="97" height="97" fill="#e85e4d"/><rect x="2304" y="1632" width="97" height="97" fill="#e85e4d"/><rect x="2400" y="1632" width="97" height="97" fill="#e85d4d"/><rect x="2496" y="1632" width="97" height="97" fill="#e85d4d"/><rect x="2592" y="1632" width="97" height="97" fill="#e85d4d"/><rect x="2688" y="1632" width="97" height="97" fill="#e85d4d"/><rect x="2784" y="1632" width="97" height="97" fill="#e85d4e"/><rect x="2880" y="1632" width="97" height="97" fill="#e85d4e"/><rect x="2976" y="1632" width="97" height="97" fill="#e85d4e"/><rect x="3072" y="1632" width="97" height="97" fill="#e85d4e"/><rect x="-288" y="1728" width="97" height="97" fill="#eb6956"/><rect x="-192" y="1728" width="97" height="97" fill="#eb6956"/><rect x="-96" y="1728" width="97" height="97" fill="#eb6956"/><rect x="0" y="1728" width="97" height="97" fill="#eb6956"/><rect x="96" y="1728" width="97" height="97" fill="#eb6956"/><rect x="192" y="1728" width="97" height="97" fill="#eb6956"/><rect x="288" y="1728" width="97" height="97" fill="#eb6956"/><rect x="384" y="1728" width="97" height="97" fill="#eb6956"/><rect x="480" y="1728" width="97" height="97" fill="#eb6856"/><rect x="576" y="1728" width="97" height="97" fill="#eb6855"/><rect x="672" y="1728" width="97" height="97" fill="#eb6855"/><rect x="768" y="1728" width="97" height="97" fill="#eb6755"/><rect x="864" y="1728" width="97" height="97" fill="#eb6755"/><rect x="960" y="1728" width="97" height="97" fill="#ea6654"/><rect x="1056" y="1728" width="97" height="97" fill="#ea6554"/><rect x="1152" y="1728" width="97" height="97" fill="#ea6453"/><rect x="1248" y="1728" width="97" height="97" fill="#ea6352"/><rect x="1344" y="1728" width="97" height="97" fill="#ea6251"/><rect x="1440" y="1728" width="97" height="97" fill="#e96150"/><rect x="1536" y="1728" width="97" height="97" fill="#e96050"/><rect x="1632" y="1728" width="97" height="97" fill="#e95f4f"/><rect x="1728" y="1728" width="97" height="97" fill="#e95f4e"/><rect x="1824" y="1728" width="97" height="97" fill="#e95e4e"/><rect x="1920" y="1728" width="97" height="97" fill="#e95e4e"/><rect x="2016" y="1728" width="97" height="97" fill="#e85e4d"/><rect x="2112" y="1728" width="97" height="97" fill="#e85e4d"/><rect x="2208" y="1728" width="97" height="97" fill="#e85e4d"/><rect x="2304" y="1728" width="97" height="97" fill="#e85e4d"/><rect x="2400" y="1728" width="97" height="97" fill="#e85d4d"/><rect x="2496" y="1728" width="97" height="97" fill="#e85d4d"/><rect x="2592" y="1728" width="97" height="97" fill="#e85d4d"/><rect x="2688" y="1728" width="97" height="97" fill="#e85d4d"/><rect x="2784" y="1728" width="97" height="97" fill="#e85d4d"/><rect x="2880" y="1728" width="97" height="97" fill="#e85d4e"/><rect x="2976" y="1728" width="97" height="97" fill="#e85d4e"/><rect x="3072" y="1728" width="97" height="97" fill="#e85d4e"/></g></g></g>
<path d="M1400 1098.6 L2100 1349 L2069.7 1433.8 L1369.7 1183.4 Z" fill="url(#gedge)" mask="url(#medge)"/>
<path d="M440.0 0.0 C462.8 8.0 532.2 32.2 577.0 48.0 C621.8 63.8 670.5 79.7 709.0 94.5 C747.5 109.3 775.0 122.1 808.0 137.0 C841.0 151.9 871.8 166.3 907.0 184.0 C942.2 201.7 978.5 220.7 1019.0 243.0 C1059.5 265.3 1103.2 288.5 1150.0 318.0 C1196.8 347.5 1275.0 403.0 1300.0 420.0 L1400 560 L2100 760 L2960 860 L2960 -10 L440 -10 Z" fill="url(#gsky)"/>
<g clip-path="url(#cpsky)"><path d="M900.0 20.0 C916.7 24.7 957.5 39.7 1000.0 48.0 C1042.5 56.3 1087.8 61.5 1155.0 70.0 C1222.2 78.5 1312.2 93.5 1403.0 99.0 C1493.8 104.5 1618.0 99.5 1700.0 103.0 C1782.0 106.5 1838.2 110.2 1895.0 120.0 C1951.8 129.8 1992.3 144.5 2041.0 162.0 C2089.7 179.5 2138.2 204.7 2187.0 225.0 C2235.8 245.3 2285.2 268.2 2334.0 284.0 C2382.8 299.8 2423.2 311.2 2480.0 320.0 C2536.8 328.8 2608.3 330.0 2675.0 337.0 C2741.7 344.0 2832.5 356.2 2880.0 362.0 C2927.5 367.8 2946.7 370.3 2960.0 372.0 L2960 900 L1000 900 Z" fill="url(#gw1)"/><path d="M900.0 20.0 C916.7 24.7 957.5 39.7 1000.0 48.0 C1042.5 56.3 1087.8 61.5 1155.0 70.0 C1222.2 78.5 1312.2 93.5 1403.0 99.0 C1493.8 104.5 1618.0 99.5 1700.0 103.0 C1782.0 106.5 1838.2 110.2 1895.0 120.0 C1951.8 129.8 1992.3 144.5 2041.0 162.0 C2089.7 179.5 2138.2 204.7 2187.0 225.0 C2235.8 245.3 2285.2 268.2 2334.0 284.0 C2382.8 299.8 2423.2 311.2 2480.0 320.0 C2536.8 328.8 2608.3 330.0 2675.0 337.0 C2741.7 344.0 2832.5 356.2 2880.0 362.0 C2927.5 367.8 2946.7 370.3 2960.0 372.0 L2960 900 L1000 900 Z" fill="url(#gw1d)"/><path d="M860.0 10.0 C871.2 16.3 894.3 32.3 927.0 48.0 C959.7 63.7 1009.8 87.2 1056.0 104.0 C1102.2 120.8 1146.2 136.5 1204.0 149.0 C1261.8 161.5 1345.2 170.7 1403.0 179.0 C1460.8 187.3 1505.7 189.2 1551.0 199.0 C1596.3 208.8 1616.8 222.8 1675.0 238.0 C1733.2 253.2 1827.5 273.5 1900.0 290.0 C1972.5 306.5 2054.0 321.8 2110.0 337.0 C2166.0 352.2 2190.5 363.0 2236.0 381.0 C2281.5 399.0 2334.2 427.0 2383.0 445.0 C2431.8 463.0 2480.3 476.0 2529.0 489.0 C2577.7 502.0 2626.3 513.3 2675.0 523.0 C2723.7 532.7 2786.8 541.3 2821.0 547.0 C2855.2 552.7 2856.8 553.2 2880.0 557.0 C2903.2 560.8 2946.7 567.8 2960.0 570.0 L2960 1000 L600 1000 Z" fill="url(#gw2)"/></g>
<path d="M1700.0 330.0 C1733.3 340.0 1831.7 366.8 1900.0 390.0 C1968.3 413.2 2062.3 451.0 2110.0 469.0 C2157.7 487.0 2155.7 486.2 2186.0 498.0 C2216.3 509.8 2261.2 529.5 2292.0 540.0 C2322.8 550.5 2344.7 555.4 2371.0 561.0 C2397.3 566.6 2419.2 569.7 2450.0 573.5 C2480.8 577.3 2520.7 579.9 2556.0 584.0 C2591.3 588.1 2626.7 591.7 2662.0 598.0 C2697.3 604.3 2739.8 614.8 2768.0 622.0 C2796.2 629.2 2812.3 633.9 2831.0 641.0 C2849.7 648.1 2858.5 653.0 2880.0 664.5 C2901.5 676.0 2946.7 702.4 2960.0 710.0 L2960 1000 L1700 700 Z" fill="url(#gwhite)"/>
<path d="M1700.0 580.0 C1733.3 586.3 1831.7 604.8 1900.0 618.0 C1968.3 631.2 2053.5 647.7 2110.0 659.0 C2166.5 670.3 2191.2 675.8 2239.0 686.0 C2286.8 696.2 2353.0 709.9 2397.0 720.0 C2441.0 730.1 2467.7 736.8 2503.0 746.5 C2538.3 756.2 2573.7 765.6 2609.0 778.0 C2644.3 790.4 2684.2 807.8 2715.0 820.6 C2745.8 833.4 2766.5 844.4 2794.0 855.0 C2821.5 865.6 2852.3 875.7 2880.0 884.0 C2907.7 892.3 2946.7 901.5 2960.0 905.0 L2960 1080 L2960.0 1080.0 C2946.7 1078.0 2912.0 1071.7 2880.0 1068.0 C2848.0 1064.3 2808.7 1059.0 2768.0 1058.0 C2727.3 1057.0 2666.4 1061.7 2635.6 1062.0 C2604.8 1062.3 2598.9 1063.2 2583.0 1060.0 C2567.1 1056.8 2553.3 1051.6 2540.0 1043.0 C2526.7 1034.4 2516.2 1020.8 2503.0 1008.5 C2489.8 996.2 2474.2 980.1 2461.0 969.0 C2447.8 957.9 2439.0 949.5 2424.0 942.0 C2409.0 934.5 2393.0 930.2 2371.0 924.0 C2349.0 917.8 2318.5 912.1 2292.0 905.0 C2265.5 897.9 2234.2 889.8 2212.0 881.5 C2189.8 873.2 2176.0 864.8 2159.0 855.0 C2142.0 845.2 2136.5 840.5 2110.0 823.0 C2083.5 805.5 2051.7 780.5 2000.0 750.0 C1948.3 719.5 1833.3 658.3 1800.0 640.0 Z" fill="url(#gorange)"/><path d="M1700.0 580.0 C1733.3 586.3 1831.7 604.8 1900.0 618.0 C1968.3 631.2 2053.5 647.7 2110.0 659.0 C2166.5 670.3 2191.2 675.8 2239.0 686.0 C2286.8 696.2 2353.0 709.9 2397.0 720.0 C2441.0 730.1 2467.7 736.8 2503.0 746.5 C2538.3 756.2 2573.7 765.6 2609.0 778.0 C2644.3 790.4 2684.2 807.8 2715.0 820.6 C2745.8 833.4 2766.5 844.4 2794.0 855.0 C2821.5 865.6 2852.3 875.7 2880.0 884.0 C2907.7 892.3 2946.7 901.5 2960.0 905.0 L2960 1080 L2960.0 1080.0 C2946.7 1078.0 2912.0 1071.7 2880.0 1068.0 C2848.0 1064.3 2808.7 1059.0 2768.0 1058.0 C2727.3 1057.0 2666.4 1061.7 2635.6 1062.0 C2604.8 1062.3 2598.9 1063.2 2583.0 1060.0 C2567.1 1056.8 2553.3 1051.6 2540.0 1043.0 C2526.7 1034.4 2516.2 1020.8 2503.0 1008.5 C2489.8 996.2 2474.2 980.1 2461.0 969.0 C2447.8 957.9 2439.0 949.5 2424.0 942.0 C2409.0 934.5 2393.0 930.2 2371.0 924.0 C2349.0 917.8 2318.5 912.1 2292.0 905.0 C2265.5 897.9 2234.2 889.8 2212.0 881.5 C2189.8 873.2 2176.0 864.8 2159.0 855.0 C2142.0 845.2 2136.5 840.5 2110.0 823.0 C2083.5 805.5 2051.7 780.5 2000.0 750.0 C1948.3 719.5 1833.3 658.3 1800.0 640.0 Z" fill="url(#gyel)"/>
</svg>
<div id="menubar">
<svg id="icons" width="2880" height="48" viewBox="0 0 2880 48" style="position:absolute;left:0;top:0;overflow:visible">
<defs>
<filter id="ish" x="-20%" y="-20%" width="140%" height="160%"><feDropShadow dx="0" dy="1" stdDeviation="1.5" flood-color="#000" flood-opacity="0.25"/></filter>
<radialGradient id="siribg" cx="0.5" cy="0.5" r="0.5"><stop offset="0" stop-color="#3a3470"/><stop offset="0.75" stop-color="#2a2252"/><stop offset="1" stop-color="#17122e"/></radialGradient>
<radialGradient id="siri1" cx="0.5" cy="0.5" r="0.5"><stop offset="0" stop-color="#ff4fa0" stop-opacity="0.95"/><stop offset="1" stop-color="#ff4fa0" stop-opacity="0"/></radialGradient>
<radialGradient id="siri2" cx="0.5" cy="0.5" r="0.5"><stop offset="0" stop-color="#45d6ff" stop-opacity="0.95"/><stop offset="1" stop-color="#45d6ff" stop-opacity="0"/></radialGradient>
<radialGradient id="siri3" cx="0.5" cy="0.5" r="0.5"><stop offset="0" stop-color="#5fe6a0" stop-opacity="0.9"/><stop offset="1" stop-color="#5fe6a0" stop-opacity="0"/></radialGradient>
<radialGradient id="siri5" cx="0.5" cy="0.5" r="0.5"><stop offset="0" stop-color="#4f78e0" stop-opacity="0.9"/><stop offset="1" stop-color="#4f78e0" stop-opacity="0"/></radialGradient>
<radialGradient id="siri4" cx="0.5" cy="0.5" r="0.5"><stop offset="0" stop-color="#fff" stop-opacity="1"/><stop offset="0.5" stop-color="#fff" stop-opacity="0.6"/><stop offset="1" stop-color="#fff" stop-opacity="0"/></radialGradient>
<clipPath id="siriclip"><circle cx="2536" cy="24" r="13.6"/></clipPath>
<clipPath id="userclip"><circle cx="2346" cy="24.8" r="11.2"/></clipPath>
</defs>
<g filter="url(#ish)">
<!-- apple -->
<g transform="translate(43.9,4.3) scale(0.0692)" fill="#f4f1f7"><path d="M318.7 268.7c-.2-36.7 16.4-64.4 50-84.8-18.8-26.9-47.2-41.7-84.7-44.6-35.5-2.8-74.3 20.7-88.5 20.7-15 0-49.4-19.7-76.4-19.7C63.3 141.2 4 184.8 4 273.5q0 39.3 14.4 81.2c12.8 36.7 59 126.7 107.2 125.2 25.2-.6 43-17.9 75.8-17.9 31.8 0 48.3 17.9 76.4 17.9 48.6-.7 90.4-82.5 102.6-119.3-65.2-30.7-61.7-90-61.7-91.9zm-56.6-164.2c27.3-32.4 24.8-61.9 24-72.5-24.1 1.4-52 16.4-67.9 34.9-17.5 19.8-27.8 44.3-25.6 71.9 26.1 2 49.9-11.4 69.5-34.3z"/></g>
</g>
<!-- cloud (dimmed) -->
<g fill="#fff" fill-opacity="0.28">
<path d="M2030 34.8 L2030 31.6 C2030.3 28.6 2033 26.2 2036.8 25.7 C2036.6 22.6 2038.8 20.3 2041.6 20 C2043 19.9 2044.2 20.2 2044.9 20.7 C2046.6 16.2 2050.3 13.1 2055 13.1 C2061.4 13.1 2066.7 17.4 2066.7 22.4 C2066.7 26 2064.4 28.2 2061.6 28.9 L2043.6 28.9 Q2042.9 29.5 2043.6 30.1 L2060.4 30.1 C2062 30.3 2062.8 31.6 2062.8 33 L2062.8 34.8 Z"/>
<path d="M2064 34.8 C2064.4 32.8 2066 30.8 2068.6 30 L2073.4 29.6 Q2074 29.2 2073.4 28.9 L2070.6 28.7 C2068.2 28.3 2067 26.6 2067 25 C2067 23.6 2067.6 22.9 2068.6 22.8 C2073.6 22.6 2078 27.4 2078 32 L2078 34.8 Z"/>
</g>
<g filter="url(#ish)">
<!-- bluetooth -->
<path d="M2117.8 15.6 L2132.6 28.4 L2125.4 34.6 L2125.4 9.6 L2132.6 15.6 L2117.8 28.4" fill="none" stroke="#fff" stroke-width="2.6" stroke-linejoin="round" stroke-linecap="round"/>
<!-- battery -->
<rect x="2175.2" y="13" width="43.6" height="21.9" rx="6.6" fill="#2a64a0" fill-opacity="0.75" stroke="#fff" stroke-opacity="0.5" stroke-width="2.4"/>
<rect x="2177.7" y="15.6" width="38.5" height="16.9" rx="3.6" fill="#fff" fill-opacity="0.92"/>
<path d="M2221.8 19.8 C2224.3 20.8 2225.2 22.4 2225.2 24 C2225.2 25.6 2224.3 27.2 2221.8 28.2 Z" fill="#fff" fill-opacity="0.5"/>
<path d="M2201 11.8 L2188.6 24.8 Q2188.4 25.9 2189.6 26 L2196 26.1 L2192.8 36.1 L2205.5 22.6 Q2205.8 21.5 2204.6 21.4 L2198.3 21.4 Z" fill="#2c66a3" stroke="#2c66a3" stroke-width="3.4" stroke-linejoin="round"/>
<path d="M2201 11.8 L2188.6 24.8 Q2188.4 25.9 2189.6 26 L2196 26.1 L2192.8 36.1 L2205.5 22.6 Q2205.8 21.5 2204.6 21.4 L2198.3 21.4 Z" fill="#f2f5f9"/>
<!-- wifi -->
<g fill="none" stroke="#fff" stroke-width="4.2" stroke-linecap="butt">
<path d="M2263.2 20.9 A21 21 0 0 1 2292.8 20.9"/>
<path d="M2268.6 26.3 A13.3 13.3 0 0 1 2287.4 26.3"/>
</g>
<path d="M2278 35 L2272.6 29.8 A7.6 7.6 0 0 1 2283.4 29.8 Z" fill="#fff"/>
<!-- user -->
<circle cx="2346" cy="24.8" r="11.8" fill="none" stroke="#fff" stroke-width="2.6"/>
<circle cx="2346" cy="21.8" r="4.7" fill="#fff"/>
<g clip-path="url(#userclip)"><ellipse cx="2346" cy="38" rx="10.5" ry="8.3" fill="#fff"/></g>
<!-- search -->
<circle cx="2408" cy="22" r="8.8" fill="none" stroke="#fff" stroke-width="2.9"/>
<path d="M2414.4 28.6 L2421.2 35.2" stroke="#fff" stroke-width="3.4" stroke-linecap="round"/>
<!-- control center -->
<rect x="2460.8" y="13.1" width="26.4" height="9.4" rx="4.7" fill="none" stroke="#fff" stroke-width="2.2"/>
<circle cx="2466.6" cy="17.8" r="2.9" fill="#fff"/>
<path d="M2465.2 27 H2482.8 A5.4 5.4 0 0 1 2482.8 37.8 H2465.2 A5.4 5.4 0 0 1 2465.2 27 Z M2481.8 29.4 A3 3 0 1 0 2481.8 35.4 A3 3 0 1 0 2481.8 29.4 Z" fill="#fff" fill-rule="evenodd"/>
</g>
<!-- siri -->
<circle cx="2536" cy="24.8" r="14.4" fill="#000" fill-opacity="0.16"/>
<circle cx="2536" cy="24" r="14" fill="url(#siribg)"/>
<g clip-path="url(#siriclip)">
<ellipse cx="2536" cy="33" rx="11" ry="6" fill="url(#siri5)"/>
<ellipse cx="2531" cy="15.5" rx="10" ry="7" fill="url(#siri1)" transform="rotate(-25 2531 15.5)"/>
<ellipse cx="2528.5" cy="29" rx="8" ry="5" fill="url(#siri2)" transform="rotate(-40 2528.5 29)"/>
<ellipse cx="2544.5" cy="24.5" rx="6.5" ry="4.5" fill="url(#siri3)" transform="rotate(15 2544.5 24.5)"/>
<ellipse cx="2540" cy="33" rx="4" ry="6" fill="url(#siri1)" transform="rotate(-20 2540 33)"/>
<ellipse cx="2535" cy="24" rx="10" ry="2.6" fill="url(#siri4)" transform="rotate(-42 2535 24)"/>
<ellipse cx="2536" cy="24" rx="8" ry="2.2" fill="url(#siri4)" transform="rotate(58 2536 24)"/>
<ellipse cx="2537" cy="24" rx="8" ry="1.8" fill="url(#siri4)" transform="rotate(8 2537 24)"/>
</g>
</svg>

<span class="t b" id="m_finder" style="left:113.00px;top:10.6px;font-size:27px;font-weight:bold;letter-spacing:0.400px;">Finder</span>
<span class="t" id="m_file" style="left:237.00px;top:10.6px;font-size:27px;font-weight:normal;">File</span>
<span class="t" id="m_edit" style="left:321.00px;top:10.6px;font-size:27px;font-weight:normal;letter-spacing:0.333px;">Edit</span>
<span class="t" id="m_view" style="left:411.00px;top:10.6px;font-size:27px;font-weight:normal;">View</span>
<span class="t" id="m_go" style="left:510.00px;top:10.6px;font-size:27px;font-weight:normal;letter-spacing:-1.000px;">Go</span>
<span class="t" id="m_window" style="left:587.00px;top:10.6px;font-size:27px;font-weight:normal;letter-spacing:-0.200px;">Window</span>
<span class="t" id="m_help" style="left:723.00px;top:10.6px;font-size:27px;font-weight:normal;letter-spacing:0.333px;">Help</span>
<span class="t" id="m_date" style="left:2581.20px;top:10.1px;font-size:27px;font-weight:normal;letter-spacing:0.012px;">Mon Jun 7</span>
<span class="t" id="m_time" style="left:2723.00px;top:10.1px;font-size:27px;font-weight:normal;letter-spacing:1.214px;">11:28 AM</span>
</div>
<div id="win">
<div id="titlebar"></div>
<div class="tl" style="left:16px;background:#ed6a5e;border:1px solid #d95449;"></div>
<div class="tl" style="left:56px;background:#f5bf4f;border:1px solid #d8a235;"></div>
<div class="tl" style="left:96px;background:#dedada;border:1px solid #c6c2c2;"></div>
<div id="box"></div>
<div id="seg"></div>
<div class="sep" style="left:328px"></div>
<div class="sep" style="left:820px"></div>
<div class="sep" style="left:984px"></div>
<div id="segsel"></div>
<div class="btn" style="left:1002px;top:190px;width:252px;"></div>
<div id="table"><div id="thead"></div></div>
<div class="btn" style="left:830px;top:834px;width:424px;"></div>
<span class="t b" id="w_title" style="left:591.40px;top:14.4px;font-size:26px;font-weight:bold;color:#4a4748;letter-spacing:0.620px;">Preferences</span>
<span class="t" id="w_t1" style="left:212.40px;top:112.0px;font-size:26px;font-weight:normal;color:#262424;letter-spacing:0.100px;">General</span>
<span class="t" id="w_t2" style="left:352.80px;top:112.0px;font-size:26px;font-weight:normal;color:#262424;letter-spacing:0.767px;">Connection</span>
<span class="t" id="w_t3" style="left:538.00px;top:112.0px;font-size:26px;font-weight:normal;color:#1c1c1c;letter-spacing:0.483px;">Account</span>
<span class="t" id="w_t4" style="left:679.00px;top:112.0px;font-size:26px;font-weight:normal;color:#262424;letter-spacing:0.471px;">Feedback</span>
<span class="t" id="w_t5" style="left:844.00px;top:112.0px;font-size:26px;font-weight:normal;color:#262424;letter-spacing:0.071px;">DNS Logs</span>
<span class="t" id="w_t6" style="left:1010.20px;top:112.0px;font-size:26px;font-weight:normal;color:#262424;letter-spacing:0.371px;">Advanced</span>
<span class="t b" id="w_lk" style="left:87.60px;top:198.7px;font-size:28px;font-weight:bold;color:#000;letter-spacing:-0.418px;">License Key:</span>
<span class="t" id="w_key" style="left:268.00px;top:198.7px;font-size:28px;font-weight:normal;color:#1a1a1a;letter-spacing:0.708px;">VM038Zg1-5Y146jXN-23B5RwM8</span>
<span class="t" id="w_btn1" style="left:1022.80px;top:196.4px;font-size:26px;font-weight:normal;color:#000;letter-spacing:0.362px;">Use Different Key</span>
<span class="t" id="w_hdr" style="left:138.00px;top:278.2px;font-size:26px;font-weight:normal;color:#2a2a2a;letter-spacing:0.448px;">Devices using your license key</span>
<span class="t" id="w_dev" style="left:150.60px;top:356.4px;font-size:28px;font-weight:normal;color:#000;letter-spacing:0.317px;">macOS (This device)</span>
<span class="t" id="w_model" style="left:149.60px;top:400.1px;font-size:24px;font-weight:normal;color:#858585;letter-spacing:-0.208px;">MacBookPro17,1</span>
<span class="t" id="w_btn2" style="left:849.80px;top:840.4px;font-size:26px;font-weight:normal;color:#000;letter-spacing:0.640px;">Login with Cloudflare for Teams</span>
</div>
</body></html>
